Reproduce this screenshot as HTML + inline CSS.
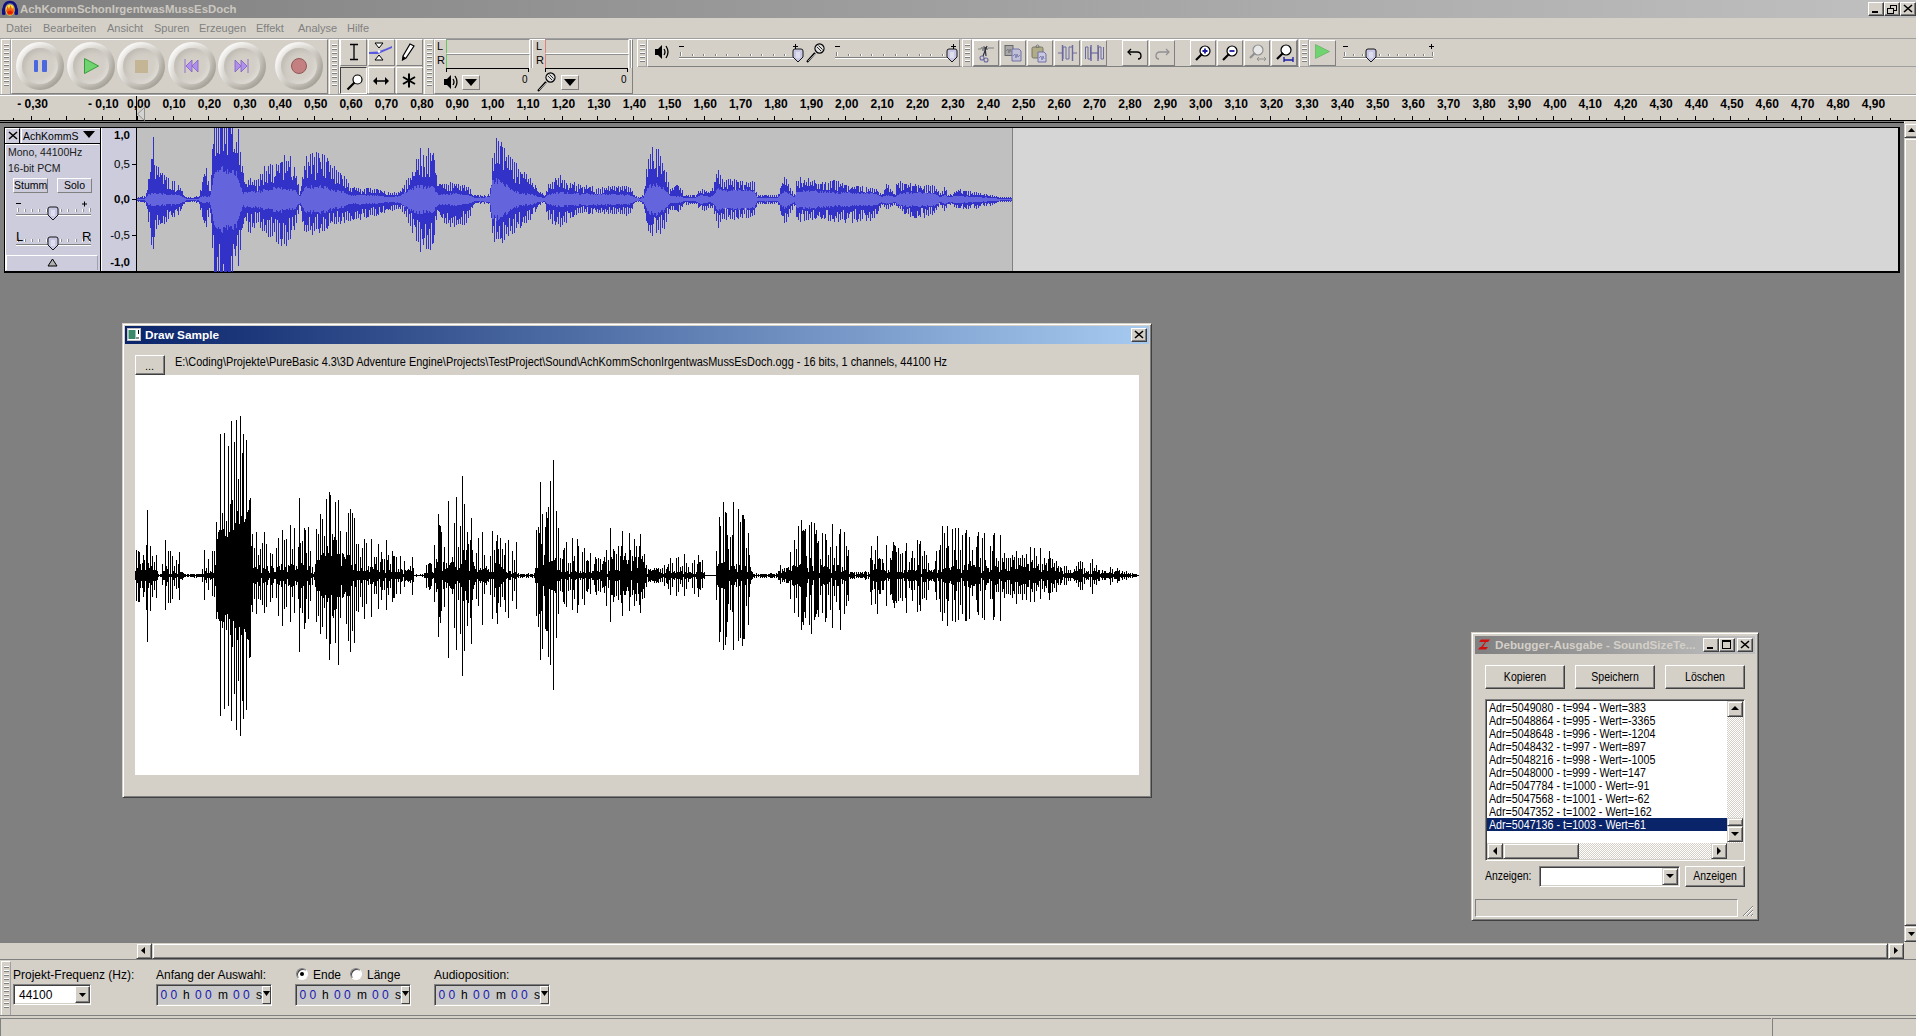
<!DOCTYPE html><html><head><meta charset="utf-8"><style>
*{margin:0;padding:0;box-sizing:border-box}
html,body{width:1916px;height:1036px;overflow:hidden;background:#d4d0c8;font-family:"Liberation Sans",sans-serif;font-size:11px;color:#000}
.a{position:absolute}
.t{position:absolute;white-space:nowrap;line-height:1}
.btn{position:absolute;background:#d4d0c8;border:1px solid;border-color:#fff #404040 #404040 #fff;box-shadow:inset -1px -1px #808080}
.sunk{position:absolute;border:1px solid;border-color:#808080 #fff #fff #808080;box-shadow:inset 1px 1px #404040,inset -1px -1px #d4d0c8}
.grip{position:absolute;width:10px;border:1px solid;border-color:#fff #808080 #808080 #fff;
 background:repeating-linear-gradient(to bottom,#d4d0c8 0,#d4d0c8 2px,#808080 2px,#808080 3px,#fff 3px,#fff 4px)}
</style></head><body>
<div class="a" style="left:0;top:0;width:1916px;height:18px;background:linear-gradient(to right,#808080,#c0c0c0)"></div>
<div class="t" style="left:20px;top:4px;font-weight:bold;font-size:11.4px;color:#ccc8c0">AchKommSchonIrgentwasMussEsDoch</div>
<svg class="a" style="left:1px;top:0" width="18" height="17" viewBox="0 0 18 17"><path d="M3 13 C2 5 5 2 9 2 C13 2 16 5 15 13" fill="none" stroke="#101080" stroke-width="2.6"/><rect x="1" y="8" width="3.5" height="7" rx="1.5" fill="#101080"/><rect x="13.5" y="8" width="3.5" height="7" rx="1.5" fill="#101080"/><ellipse cx="9" cy="10" rx="4.6" ry="5.5" fill="#ffe040"/><path d="M5 11 L6.5 6 L8 9 L9.5 5 L11 9 L12.5 7 L13 12 L11 15 H7Z" fill="#f06010"/><path d="M6 12 Q9 9 12 12 L11 14 H7Z" fill="#e02000"/></svg>
<div class="btn" style="left:1868px;top:2px;width:16px;height:14px"></div>
<div class="btn" style="left:1884px;top:2px;width:16px;height:14px"></div>
<div class="btn" style="left:1900px;top:2px;width:16px;height:14px"></div>
<div class="a" style="left:1872px;top:11px;width:6px;height:2px;background:#000"></div>
<svg class="a" style="left:1887px;top:4px" width="10" height="10"><rect x="3.5" y="1.5" width="6" height="5" fill="none" stroke="#000"/><rect x="3" y="1" width="7" height="1" fill="#000"/><rect x="0.5" y="4.5" width="6" height="5" fill="#d4d0c8" stroke="#000"/><rect x="0" y="4" width="7" height="1" fill="#000"/></svg>
<svg class="a" style="left:1903px;top:4px" width="10" height="9"><path d="M1 1L9 8M9 1L1 8" stroke="#000" stroke-width="1.6"/></svg>
<div class="t" style="left:6px;top:23px;color:#808080">Datei</div>
<div class="t" style="left:43px;top:23px;color:#808080">Bearbeiten</div>
<div class="t" style="left:107px;top:23px;color:#808080">Ansicht</div>
<div class="t" style="left:154px;top:23px;color:#808080">Spuren</div>
<div class="t" style="left:199px;top:23px;color:#808080">Erzeugen</div>
<div class="t" style="left:256px;top:23px;color:#808080">Effekt</div>
<div class="t" style="left:298px;top:23px;color:#808080">Analyse</div>
<div class="t" style="left:347px;top:23px;color:#808080">Hilfe</div>
<div class="a" style="left:0;top:38px;width:1916px;height:1px;background:#a0a0a0"></div>
<div class="a" style="left:637px;top:66px;width:1279px;height:1px;background:#a0a0a0"></div>
<div class="a" style="left:0;top:94px;width:1916px;height:1px;background:#a0a0a0"></div>
<div class="a" style="left:1px;top:39px;width:10px;height:55px;border-left:1px solid #fff;border-top:1px solid #fff;border-right:1px solid #a0a0a0"></div>
<div class="a" style="left:4px;top:44px;width:5px;height:2px;border-top:1px solid #fff;border-bottom:1px solid #808080"></div>
<div class="a" style="left:4px;top:48px;width:5px;height:2px;border-top:1px solid #fff;border-bottom:1px solid #808080"></div>
<div class="a" style="left:4px;top:52px;width:5px;height:2px;border-top:1px solid #fff;border-bottom:1px solid #808080"></div>
<div class="a" style="left:4px;top:56px;width:5px;height:2px;border-top:1px solid #fff;border-bottom:1px solid #808080"></div>
<div class="a" style="left:4px;top:60px;width:5px;height:2px;border-top:1px solid #fff;border-bottom:1px solid #808080"></div>
<div class="a" style="left:4px;top:64px;width:5px;height:2px;border-top:1px solid #fff;border-bottom:1px solid #808080"></div>
<div class="a" style="left:4px;top:68px;width:5px;height:2px;border-top:1px solid #fff;border-bottom:1px solid #808080"></div>
<div class="a" style="left:4px;top:72px;width:5px;height:2px;border-top:1px solid #fff;border-bottom:1px solid #808080"></div>
<div class="a" style="left:4px;top:76px;width:5px;height:2px;border-top:1px solid #fff;border-bottom:1px solid #808080"></div>
<div class="a" style="left:4px;top:80px;width:5px;height:2px;border-top:1px solid #fff;border-bottom:1px solid #808080"></div>
<div class="a" style="left:4px;top:84px;width:5px;height:2px;border-top:1px solid #fff;border-bottom:1px solid #808080"></div>
<div class="a" style="left:11px;top:39px;width:317px;height:55px;border-left:1px solid #fff;border-top:1px solid #fff;border-right:1px solid #808080;border-bottom:1px solid #808080"></div>
<div class="a" style="left:16px;top:42px;width:48px;height:48px;border-radius:50%;background:#d4d0c8;box-shadow:inset 5px 5px 6px -2px rgba(255,255,255,.9),inset -5px -5px 7px -2px rgba(120,116,108,.55)"></div>
<div class="a" style="left:22px;top:48px;width:36px;height:36px;border-radius:50%;background:#d3cfc7;box-shadow:inset 3px 3px 5px rgba(150,146,138,.3),inset -2px -2px 4px rgba(255,255,255,.3)"></div>
<div class="a" style="left:66.5px;top:42px;width:48px;height:48px;border-radius:50%;background:#d4d0c8;box-shadow:inset 5px 5px 6px -2px rgba(255,255,255,.9),inset -5px -5px 7px -2px rgba(120,116,108,.55)"></div>
<div class="a" style="left:72.5px;top:48px;width:36px;height:36px;border-radius:50%;background:#d3cfc7;box-shadow:inset 3px 3px 5px rgba(150,146,138,.3),inset -2px -2px 4px rgba(255,255,255,.3)"></div>
<div class="a" style="left:117px;top:42px;width:48px;height:48px;border-radius:50%;background:#d4d0c8;box-shadow:inset 5px 5px 6px -2px rgba(255,255,255,.9),inset -5px -5px 7px -2px rgba(120,116,108,.55)"></div>
<div class="a" style="left:123px;top:48px;width:36px;height:36px;border-radius:50%;background:#d3cfc7;box-shadow:inset 3px 3px 5px rgba(150,146,138,.3),inset -2px -2px 4px rgba(255,255,255,.3)"></div>
<div class="a" style="left:167.5px;top:42px;width:48px;height:48px;border-radius:50%;background:#d4d0c8;box-shadow:inset 5px 5px 6px -2px rgba(255,255,255,.9),inset -5px -5px 7px -2px rgba(120,116,108,.55)"></div>
<div class="a" style="left:173.5px;top:48px;width:36px;height:36px;border-radius:50%;background:#d3cfc7;box-shadow:inset 3px 3px 5px rgba(150,146,138,.3),inset -2px -2px 4px rgba(255,255,255,.3)"></div>
<div class="a" style="left:217.5px;top:42px;width:48px;height:48px;border-radius:50%;background:#d4d0c8;box-shadow:inset 5px 5px 6px -2px rgba(255,255,255,.9),inset -5px -5px 7px -2px rgba(120,116,108,.55)"></div>
<div class="a" style="left:223.5px;top:48px;width:36px;height:36px;border-radius:50%;background:#d3cfc7;box-shadow:inset 3px 3px 5px rgba(150,146,138,.3),inset -2px -2px 4px rgba(255,255,255,.3)"></div>
<div class="a" style="left:274.5px;top:42px;width:48px;height:48px;border-radius:50%;background:#d4d0c8;box-shadow:inset 5px 5px 6px -2px rgba(255,255,255,.9),inset -5px -5px 7px -2px rgba(120,116,108,.55)"></div>
<div class="a" style="left:280.5px;top:48px;width:36px;height:36px;border-radius:50%;background:#d3cfc7;box-shadow:inset 3px 3px 5px rgba(150,146,138,.3),inset -2px -2px 4px rgba(255,255,255,.3)"></div>
<div class="a" style="left:34px;top:60px;width:4px;height:12px;background:#4a68e0;border-radius:1px"></div>
<div class="a" style="left:42px;top:60px;width:5px;height:12px;background:#4a68e0;border-radius:1px"></div>
<svg class="a" style="left:83px;top:57px" width="18" height="18"><path d="M1.5 1.5 L15.5 9 L1.5 16.5Z" fill="#6fd46f" stroke="#3c9a3c" stroke-width="1"/></svg>
<div class="a" style="left:135px;top:60px;width:13px;height:13px;background:#c4b595"></div>
<svg class="a" style="left:184px;top:58px" width="15" height="16"><path d="M1 1V15" stroke="#9070c8"/><path d="M8 2 L2 8 L8 14Z M14 2 L8 8 L14 14Z" fill="#b090ec" stroke="#8060c0" stroke-width="0.8"/></svg>
<svg class="a" style="left:234px;top:58px" width="15" height="16"><path d="M14 1V15" stroke="#9070c8"/><path d="M1 2 L7 8 L1 14Z M7 2 L13 8 L7 14Z" fill="#b090ec" stroke="#8060c0" stroke-width="0.8"/></svg>
<div class="a" style="left:291px;top:58px;width:16px;height:16px;border-radius:50%;background:#c48080;border:1px solid #905858"></div>
<div class="a" style="left:329px;top:39px;width:10px;height:55px;border-left:1px solid #fff;border-top:1px solid #fff;border-right:1px solid #a0a0a0"></div>
<div class="a" style="left:332px;top:44px;width:5px;height:2px;border-top:1px solid #fff;border-bottom:1px solid #808080"></div>
<div class="a" style="left:332px;top:48px;width:5px;height:2px;border-top:1px solid #fff;border-bottom:1px solid #808080"></div>
<div class="a" style="left:332px;top:52px;width:5px;height:2px;border-top:1px solid #fff;border-bottom:1px solid #808080"></div>
<div class="a" style="left:332px;top:56px;width:5px;height:2px;border-top:1px solid #fff;border-bottom:1px solid #808080"></div>
<div class="a" style="left:332px;top:60px;width:5px;height:2px;border-top:1px solid #fff;border-bottom:1px solid #808080"></div>
<div class="a" style="left:332px;top:64px;width:5px;height:2px;border-top:1px solid #fff;border-bottom:1px solid #808080"></div>
<div class="a" style="left:332px;top:68px;width:5px;height:2px;border-top:1px solid #fff;border-bottom:1px solid #808080"></div>
<div class="a" style="left:332px;top:72px;width:5px;height:2px;border-top:1px solid #fff;border-bottom:1px solid #808080"></div>
<div class="a" style="left:332px;top:76px;width:5px;height:2px;border-top:1px solid #fff;border-bottom:1px solid #808080"></div>
<div class="a" style="left:332px;top:80px;width:5px;height:2px;border-top:1px solid #fff;border-bottom:1px solid #808080"></div>
<div class="a" style="left:332px;top:84px;width:5px;height:2px;border-top:1px solid #fff;border-bottom:1px solid #808080"></div>
<div class="a" style="left:339px;top:39px;width:84px;height:55px;border-left:1px solid #fff;border-top:1px solid #fff;border-right:1px solid #808080;border-bottom:1px solid #808080"></div>
<div class="a" style="left:340px;top:39px;width:27px;height:27px;border-left:1px solid #fff;border-top:1px solid #fff;border-right:1px solid #808080;border-bottom:1px solid #808080"></div>
<div class="a" style="left:368px;top:39px;width:27px;height:27px;border-left:1px solid #fff;border-top:1px solid #fff;border-right:1px solid #808080;border-bottom:1px solid #808080"></div>
<div class="a" style="left:396px;top:39px;width:27px;height:27px;border-left:1px solid #fff;border-top:1px solid #fff;border-right:1px solid #808080;border-bottom:1px solid #808080"></div>
<div class="a" style="left:340px;top:67px;width:27px;height:27px;border-left:1px solid #404040;border-top:1px solid #404040;border-right:1px solid #fff;border-bottom:1px solid #fff"></div>
<div class="a" style="left:368px;top:67px;width:27px;height:27px;border-left:1px solid #fff;border-top:1px solid #fff;border-right:1px solid #808080;border-bottom:1px solid #808080"></div>
<div class="a" style="left:396px;top:67px;width:27px;height:27px;border-left:1px solid #fff;border-top:1px solid #fff;border-right:1px solid #808080;border-bottom:1px solid #808080"></div>
<svg class="a" style="left:349px;top:43px" width="10" height="18"><path d="M1 1.5H9M5 1.5V16.5M1 16.5H9" stroke="#000" stroke-width="1.3" fill="none"/></svg>
<svg class="a" style="left:368px;top:41px" width="26" height="22"><path d="M7 2H15L11 7Z" fill="#fff" stroke="#000"/><path d="M7 19H15L11 14Z" fill="#fff" stroke="#000"/><path d="M1 11 L10 10.5 L17 8 L24 5 L24 7 L17 10 L10 13 L1 13Z" fill="#5a5ae0"/><circle cx="11" cy="10.5" r="1.3" fill="#fff"/></svg>
<svg class="a" style="left:401px;top:43px" width="14" height="18"><path d="M9 1 L13 3 L5 15 L1.5 17 L2 13Z" fill="#fff" stroke="#000" stroke-width="1.2"/><path d="M2 13 L5 15 L1.5 17Z" fill="#000"/></svg>
<svg class="a" style="left:346px;top:73px" width="18" height="18"><circle cx="11.5" cy="6.5" r="4.5" fill="#fff" stroke="#000" stroke-width="1.2"/><path d="M8.5 9.5 L1.5 16.5" stroke="#000" stroke-width="2.2"/></svg>
<svg class="a" style="left:372px;top:75px" width="18" height="12"><path d="M1 6 L5 2 V10Z M17 6 L13 2 V10Z" fill="#000"/><path d="M4 6H14" stroke="#000" stroke-width="1.5"/></svg>
<svg class="a" style="left:402px;top:73px" width="14" height="15"><path d="M7 0.5V14.5M1 4L13 11M13 4L1 11" stroke="#000" stroke-width="2"/></svg>
<div class="a" style="left:424px;top:39px;width:10px;height:55px;border-left:1px solid #fff;border-top:1px solid #fff;border-right:1px solid #a0a0a0"></div>
<div class="a" style="left:427px;top:44px;width:5px;height:2px;border-top:1px solid #fff;border-bottom:1px solid #808080"></div>
<div class="a" style="left:427px;top:48px;width:5px;height:2px;border-top:1px solid #fff;border-bottom:1px solid #808080"></div>
<div class="a" style="left:427px;top:52px;width:5px;height:2px;border-top:1px solid #fff;border-bottom:1px solid #808080"></div>
<div class="a" style="left:427px;top:56px;width:5px;height:2px;border-top:1px solid #fff;border-bottom:1px solid #808080"></div>
<div class="a" style="left:427px;top:60px;width:5px;height:2px;border-top:1px solid #fff;border-bottom:1px solid #808080"></div>
<div class="a" style="left:427px;top:64px;width:5px;height:2px;border-top:1px solid #fff;border-bottom:1px solid #808080"></div>
<div class="a" style="left:427px;top:68px;width:5px;height:2px;border-top:1px solid #fff;border-bottom:1px solid #808080"></div>
<div class="a" style="left:427px;top:72px;width:5px;height:2px;border-top:1px solid #fff;border-bottom:1px solid #808080"></div>
<div class="a" style="left:427px;top:76px;width:5px;height:2px;border-top:1px solid #fff;border-bottom:1px solid #808080"></div>
<div class="a" style="left:427px;top:80px;width:5px;height:2px;border-top:1px solid #fff;border-bottom:1px solid #808080"></div>
<div class="a" style="left:427px;top:84px;width:5px;height:2px;border-top:1px solid #fff;border-bottom:1px solid #808080"></div>
<div class="a" style="left:434px;top:39px;width:199px;height:55px;border-left:1px solid #fff;border-top:1px solid #fff;border-right:1px solid #808080;border-bottom:1px solid #808080"></div>
<div class="t" style="left:437px;top:41px;font-size:11px">L</div>
<div class="t" style="left:437px;top:55px;font-size:11px">R</div>
<div class="a" style="left:446px;top:39px;width:84px;height:15px;border-top:1px solid #909090;border-right:1px solid #fff;border-bottom:1px solid #fff;border-left:1px solid #64c864"></div>
<div class="a" style="left:446px;top:54px;width:84px;height:15px;border-top:1px solid #909090;border-right:1px solid #fff;border-bottom:1px solid #fff;border-left:1px solid #64c864"></div>
<div class="a" style="left:532px;top:40px;width:1px;height:28px;background:#fff;box-shadow:-1px 0 #a0a0a0"></div>
<div class="a" style="left:446px;top:68px;width:83px;height:1px;background:#000"></div>
<div class="a" style="left:446px;top:68px;width:1px;height:4px;background:#000"></div>
<div class="a" style="left:528px;top:68px;width:1px;height:4px;background:#000"></div>
<div class="t" style="left:522px;top:75px;font-size:10px">0</div>
<div class="btn" style="left:462px;top:75px;width:18px;height:15px;box-shadow:none;border-color:#fff #808080 #808080 #fff"></div>
<svg class="a" style="left:465px;top:79px" width="12" height="7"><path d="M0 0H12L6 7Z" fill="#000"/></svg>
<div class="t" style="left:536px;top:41px;font-size:11px">L</div>
<div class="t" style="left:536px;top:55px;font-size:11px">R</div>
<div class="a" style="left:545px;top:39px;width:84px;height:15px;border-top:1px solid #909090;border-right:1px solid #fff;border-bottom:1px solid #fff;border-left:1px solid #e08080"></div>
<div class="a" style="left:545px;top:54px;width:84px;height:15px;border-top:1px solid #909090;border-right:1px solid #fff;border-bottom:1px solid #fff;border-left:1px solid #e08080"></div>
<div class="a" style="left:631px;top:40px;width:1px;height:28px;background:#fff;box-shadow:-1px 0 #a0a0a0"></div>
<div class="a" style="left:545px;top:68px;width:83px;height:1px;background:#000"></div>
<div class="a" style="left:545px;top:68px;width:1px;height:4px;background:#000"></div>
<div class="a" style="left:627px;top:68px;width:1px;height:4px;background:#000"></div>
<div class="t" style="left:621px;top:75px;font-size:10px">0</div>
<div class="btn" style="left:561px;top:75px;width:18px;height:15px;box-shadow:none;border-color:#fff #808080 #808080 #fff"></div>
<svg class="a" style="left:564px;top:79px" width="12" height="7"><path d="M0 0H12L6 7Z" fill="#000"/></svg>
<svg class="a" style="left:443px;top:74px" width="16" height="16"><path d="M1 5H4L8 1V15L4 11H1Z" fill="#000"/><path d="M10 5Q12 8 10 11M12 2Q16 8 12 14" stroke="#000" stroke-width="1.3" fill="none"/></svg>
<svg class="a" style="left:537px;top:72px" width="20" height="20"><path d="M1 19 L9 10" stroke="#000" stroke-width="2"/><path d="M2 18 L9 11" stroke="#fff" stroke-width="0.6"/><ellipse cx="13.5" cy="5.5" rx="4.5" ry="4.5" transform="rotate(45 13.5 5.5)" fill="#ddd" stroke="#000" stroke-width="1.3"/><path d="M11 4L15 8M12.5 2.5L16.5 6.5" stroke="#000" stroke-width="0.8"/></svg>
<div class="a" style="left:637px;top:39px;width:10px;height:28px;border-left:1px solid #fff;border-top:1px solid #fff;border-right:1px solid #a0a0a0"></div>
<div class="a" style="left:640px;top:44px;width:5px;height:2px;border-top:1px solid #fff;border-bottom:1px solid #808080"></div>
<div class="a" style="left:640px;top:48px;width:5px;height:2px;border-top:1px solid #fff;border-bottom:1px solid #808080"></div>
<div class="a" style="left:640px;top:52px;width:5px;height:2px;border-top:1px solid #fff;border-bottom:1px solid #808080"></div>
<div class="a" style="left:640px;top:56px;width:5px;height:2px;border-top:1px solid #fff;border-bottom:1px solid #808080"></div>
<div class="a" style="left:640px;top:60px;width:5px;height:2px;border-top:1px solid #fff;border-bottom:1px solid #808080"></div>
<div class="a" style="left:647px;top:39px;width:313px;height:28px;border-left:1px solid #fff;border-top:1px solid #fff;border-right:1px solid #808080;border-bottom:1px solid #808080"></div>
<svg class="a" style="left:654px;top:44px" width="16" height="16"><path d="M1 5H4L8 1V15L4 11H1Z" fill="#000"/><path d="M10 5Q12 8 10 11M12 2Q16 8 12 14" stroke="#000" stroke-width="1.3" fill="none"/></svg>
<svg class="a" style="left:806px;top:43px" width="20" height="20"><path d="M1 19 L9 10" stroke="#000" stroke-width="2"/><path d="M2 18 L9 11" stroke="#fff" stroke-width="0.6"/><ellipse cx="13.5" cy="5.5" rx="4.5" ry="4.5" transform="rotate(45 13.5 5.5)" fill="#ddd" stroke="#000" stroke-width="1.3"/><path d="M11 4L15 8M12.5 2.5L16.5 6.5" stroke="#000" stroke-width="0.8"/></svg>
<div class="a" style="left:679px;top:46px;width:5px;height:1px;background:#000"></div>
<div class="a" style="left:793px;top:46px;width:5px;height:1px;background:#000"></div>
<div class="a" style="left:795px;top:44px;width:1px;height:5px;background:#000"></div>
<div class="a" style="left:679px;top:57px;width:118px;height:1px;background:#808080;border-bottom:1px solid #fff;height:2px"></div>
<div class="a" style="left:680px;top:52px;width:1px;height:4px;background:#808080;box-shadow:1px 0 #fff"></div>
<div class="a" style="left:692px;top:54px;width:1px;height:2px;background:#808080;box-shadow:1px 0 #fff"></div>
<div class="a" style="left:703px;top:54px;width:1px;height:2px;background:#808080;box-shadow:1px 0 #fff"></div>
<div class="a" style="left:715px;top:54px;width:1px;height:2px;background:#808080;box-shadow:1px 0 #fff"></div>
<div class="a" style="left:726px;top:54px;width:1px;height:2px;background:#808080;box-shadow:1px 0 #fff"></div>
<div class="a" style="left:738px;top:54px;width:1px;height:2px;background:#808080;box-shadow:1px 0 #fff"></div>
<div class="a" style="left:750px;top:54px;width:1px;height:2px;background:#808080;box-shadow:1px 0 #fff"></div>
<div class="a" style="left:761px;top:54px;width:1px;height:2px;background:#808080;box-shadow:1px 0 #fff"></div>
<div class="a" style="left:773px;top:54px;width:1px;height:2px;background:#808080;box-shadow:1px 0 #fff"></div>
<div class="a" style="left:784px;top:54px;width:1px;height:2px;background:#808080;box-shadow:1px 0 #fff"></div>
<div class="a" style="left:796px;top:52px;width:1px;height:4px;background:#808080;box-shadow:1px 0 #fff"></div>
<svg class="a" style="left:792px;top:48px" width="12" height="15"><path d="M1 3 Q1 1 3 1H9Q11 1 11 3V9L6 14L1 9Z" fill="#c8c8e4" stroke="#000" stroke-width="0.9"/><path d="M4 5H8M4 7H8M4 9H8" stroke="#fff" stroke-width="0.8"/></svg>
<div class="a" style="left:835px;top:46px;width:5px;height:1px;background:#000"></div>
<div class="a" style="left:951px;top:46px;width:5px;height:1px;background:#000"></div>
<div class="a" style="left:953px;top:44px;width:1px;height:5px;background:#000"></div>
<div class="a" style="left:835px;top:57px;width:120px;height:1px;background:#808080;border-bottom:1px solid #fff;height:2px"></div>
<div class="a" style="left:836px;top:52px;width:1px;height:4px;background:#808080;box-shadow:1px 0 #fff"></div>
<div class="a" style="left:848px;top:54px;width:1px;height:2px;background:#808080;box-shadow:1px 0 #fff"></div>
<div class="a" style="left:860px;top:54px;width:1px;height:2px;background:#808080;box-shadow:1px 0 #fff"></div>
<div class="a" style="left:871px;top:54px;width:1px;height:2px;background:#808080;box-shadow:1px 0 #fff"></div>
<div class="a" style="left:883px;top:54px;width:1px;height:2px;background:#808080;box-shadow:1px 0 #fff"></div>
<div class="a" style="left:895px;top:54px;width:1px;height:2px;background:#808080;box-shadow:1px 0 #fff"></div>
<div class="a" style="left:907px;top:54px;width:1px;height:2px;background:#808080;box-shadow:1px 0 #fff"></div>
<div class="a" style="left:919px;top:54px;width:1px;height:2px;background:#808080;box-shadow:1px 0 #fff"></div>
<div class="a" style="left:930px;top:54px;width:1px;height:2px;background:#808080;box-shadow:1px 0 #fff"></div>
<div class="a" style="left:942px;top:54px;width:1px;height:2px;background:#808080;box-shadow:1px 0 #fff"></div>
<div class="a" style="left:954px;top:52px;width:1px;height:4px;background:#808080;box-shadow:1px 0 #fff"></div>
<svg class="a" style="left:946px;top:48px" width="12" height="15"><path d="M1 3 Q1 1 3 1H9Q11 1 11 3V9L6 14L1 9Z" fill="#c8c8e4" stroke="#000" stroke-width="0.9"/><path d="M4 5H8M4 7H8M4 9H8" stroke="#fff" stroke-width="0.8"/></svg>
<div class="a" style="left:962px;top:39px;width:10px;height:28px;border-left:1px solid #fff;border-top:1px solid #fff;border-right:1px solid #a0a0a0"></div>
<div class="a" style="left:965px;top:44px;width:5px;height:2px;border-top:1px solid #fff;border-bottom:1px solid #808080"></div>
<div class="a" style="left:965px;top:48px;width:5px;height:2px;border-top:1px solid #fff;border-bottom:1px solid #808080"></div>
<div class="a" style="left:965px;top:52px;width:5px;height:2px;border-top:1px solid #fff;border-bottom:1px solid #808080"></div>
<div class="a" style="left:965px;top:56px;width:5px;height:2px;border-top:1px solid #fff;border-bottom:1px solid #808080"></div>
<div class="a" style="left:965px;top:60px;width:5px;height:2px;border-top:1px solid #fff;border-bottom:1px solid #808080"></div>
<div class="a" style="left:972px;top:39px;width:326px;height:28px;border-left:1px solid #fff;border-top:1px solid #fff;border-right:1px solid #808080;border-bottom:1px solid #808080"></div>
<div class="a" style="left:973px;top:40px;width:26px;height:26px;border-left:1px solid #fff;border-top:1px solid #fff;border-right:1px solid #808080;border-bottom:1px solid #808080"></div>
<div class="a" style="left:1000px;top:40px;width:26px;height:26px;border-left:1px solid #fff;border-top:1px solid #fff;border-right:1px solid #808080;border-bottom:1px solid #808080"></div>
<div class="a" style="left:1027px;top:40px;width:26px;height:26px;border-left:1px solid #fff;border-top:1px solid #fff;border-right:1px solid #808080;border-bottom:1px solid #808080"></div>
<div class="a" style="left:1054px;top:40px;width:26px;height:26px;border-left:1px solid #fff;border-top:1px solid #fff;border-right:1px solid #808080;border-bottom:1px solid #808080"></div>
<div class="a" style="left:1081px;top:40px;width:26px;height:26px;border-left:1px solid #fff;border-top:1px solid #fff;border-right:1px solid #808080;border-bottom:1px solid #808080"></div>
<div class="a" style="left:1122px;top:40px;width:26px;height:26px;border-left:1px solid #fff;border-top:1px solid #fff;border-right:1px solid #808080;border-bottom:1px solid #808080"></div>
<div class="a" style="left:1149px;top:40px;width:26px;height:26px;border-left:1px solid #fff;border-top:1px solid #fff;border-right:1px solid #808080;border-bottom:1px solid #808080"></div>
<div class="a" style="left:1190px;top:40px;width:26px;height:26px;border-left:1px solid #fff;border-top:1px solid #fff;border-right:1px solid #808080;border-bottom:1px solid #808080"></div>
<div class="a" style="left:1217px;top:40px;width:26px;height:26px;border-left:1px solid #fff;border-top:1px solid #fff;border-right:1px solid #808080;border-bottom:1px solid #808080"></div>
<div class="a" style="left:1244px;top:40px;width:26px;height:26px;border-left:1px solid #fff;border-top:1px solid #fff;border-right:1px solid #808080;border-bottom:1px solid #808080"></div>
<div class="a" style="left:1271px;top:40px;width:26px;height:26px;border-left:1px solid #fff;border-top:1px solid #fff;border-right:1px solid #808080;border-bottom:1px solid #808080"></div>
<svg class="a" style="left:977px;top:44px" width="20" height="19"><path d="M1 5H4L5 3L6 7L7 2L8 8L9 3L10 6L11 4H17" stroke="#707070" stroke-width="0.8" fill="none"/><path d="M10 2L6 12M8 3L9 12" stroke="#303040" stroke-width="1.2"/><circle cx="5" cy="14" r="2" fill="none" stroke="#6a6aa0" stroke-width="1.1"/><circle cx="9" cy="16" r="2" fill="none" stroke="#6a6aa0" stroke-width="1.1"/></svg>
<svg class="a" style="left:1004px;top:44px" width="20" height="19"><rect x="1" y="1.5" width="8" height="10" fill="#a8a8a8" stroke="#606060" stroke-width="0.9"/><path d="M2 7L4 5L5 9L6 5L7 8" stroke="#707070" stroke-width="0.7" fill="none"/><path d="M8 5H15L17 7V17H8Z" fill="#c0c0d8" stroke="#6a6aa0" stroke-width="0.9"/><path d="M9 12L11 10L12 14L13 10L14 13L16 11" stroke="#6a6aa0" stroke-width="0.7" fill="none"/></svg>
<svg class="a" style="left:1031px;top:44px" width="20" height="19"><rect x="1" y="3" width="11" height="11" rx="1.5" fill="#b0ac88" stroke="#707060" stroke-width="0.9"/><path d="M5 3Q5 1 6.5 1Q8 1 8 3Z" fill="#e0e0e0" stroke="#606060" stroke-width="0.8"/><path d="M7 8H13L15 10V18H7Z" fill="#c8c8e0" stroke="#6a6aa0" stroke-width="0.9"/><path d="M8 14L10 12L11 16L12 12L13 15" stroke="#6a6aa0" stroke-width="0.7" fill="none"/></svg>
<svg class="a" style="left:1058px;top:44px" width="20" height="19"><path d="M0 9H4M15 9H19" stroke="#6a6aa0" stroke-width="1.2"/><path d="M4.5 1V17M14.5 1V17" stroke="#6a6aa0" stroke-width="1.4"/><path d="M5 15V3H8V15H11V3H14" stroke="#6a6aa0" stroke-width="1" fill="none"/></svg>
<svg class="a" style="left:1085px;top:44px" width="20" height="19"><path d="M0.5 15V3H3V15H5.5V3" stroke="#6a6aa0" stroke-width="1" fill="none"/><path d="M6 1V17M13 1V17" stroke="#6a6aa0" stroke-width="1.4"/><path d="M6 9H13" stroke="#6a6aa0" stroke-width="1.2"/><path d="M13.5 15V3H16V15H18.5V3" stroke="#6a6aa0" stroke-width="1" fill="none"/></svg>
<svg class="a" style="left:1126px;top:44px" width="20" height="19"><path d="M5 5 L2 8 L5 11" stroke="#000" fill="none" stroke-width="1.3"/><path d="M2 8H11Q15 8 15 12Q15 15 12 15" stroke="#000" fill="none" stroke-width="1.3"/></svg>
<svg class="a" style="left:1153px;top:44px" width="20" height="19"><path d="M13 5 L16 8 L13 11" stroke="#909090" fill="none" stroke-width="1.3"/><path d="M16 8H7Q3 8 3 12Q3 15 6 15" stroke="#909090" fill="none" stroke-width="1.3"/></svg>
<svg class="a" style="left:1194px;top:44px" width="20" height="19"><circle cx="11" cy="7" r="5" fill="#fff" stroke="#000" stroke-width="1.2"/><path d="M8 10L2 16" stroke="#000" stroke-width="2.2"/><path d="M8.5 7H13.5M11 4.5V9.5" stroke="#1a1aa0" stroke-width="1.8"/></svg>
<svg class="a" style="left:1221px;top:44px" width="20" height="19"><circle cx="11" cy="7" r="5" fill="#fff" stroke="#000" stroke-width="1.2"/><path d="M8 10L2 16" stroke="#000" stroke-width="2.2"/><path d="M8.5 7H13.5" stroke="#1a1aa0" stroke-width="1.8"/></svg>
<svg class="a" style="left:1248px;top:44px" width="20" height="19"><circle cx="10" cy="6" r="5" fill="#e8e8e8" stroke="#909090" stroke-width="1.2"/><path d="M7 9L2 14" stroke="#909090" stroke-width="2.2"/><path d="M9 15H18M9 15L11 13M9 15L11 17M18 15L16 13M18 15L16 17" stroke="#909090"/></svg>
<svg class="a" style="left:1275px;top:44px" width="20" height="19"><circle cx="11" cy="6" r="5" fill="#fff" stroke="#000" stroke-width="1.2"/><path d="M8 9L2 15" stroke="#000" stroke-width="2.2"/><path d="M9 16H18M9 13V18M18 13V18" stroke="#1a1aa0" stroke-width="1.3"/></svg>
<div class="a" style="left:1299px;top:39px;width:10px;height:28px;border-left:1px solid #fff;border-top:1px solid #fff;border-right:1px solid #a0a0a0"></div>
<div class="a" style="left:1302px;top:44px;width:5px;height:2px;border-top:1px solid #fff;border-bottom:1px solid #808080"></div>
<div class="a" style="left:1302px;top:48px;width:5px;height:2px;border-top:1px solid #fff;border-bottom:1px solid #808080"></div>
<div class="a" style="left:1302px;top:52px;width:5px;height:2px;border-top:1px solid #fff;border-bottom:1px solid #808080"></div>
<div class="a" style="left:1302px;top:56px;width:5px;height:2px;border-top:1px solid #fff;border-bottom:1px solid #808080"></div>
<div class="a" style="left:1302px;top:60px;width:5px;height:2px;border-top:1px solid #fff;border-bottom:1px solid #808080"></div>
<div class="a" style="left:1309px;top:40px;width:27px;height:26px;border-left:1px solid #fff;border-top:1px solid #fff;border-right:1px solid #808080;border-bottom:1px solid #808080"></div>
<svg class="a" style="left:1314px;top:43px" width="17" height="18"><path d="M1.5 1.5L15.5 8.5L1.5 15.5Z" fill="#6fd46f" stroke="#5aa85a" stroke-width="0.6"/></svg>
<div class="a" style="left:1343px;top:46px;width:5px;height:1px;background:#000"></div>
<div class="a" style="left:1429px;top:46px;width:5px;height:1px;background:#000"></div>
<div class="a" style="left:1431px;top:44px;width:1px;height:5px;background:#000"></div>
<div class="a" style="left:1343px;top:57px;width:90px;height:1px;background:#808080;border-bottom:1px solid #fff;height:2px"></div>
<div class="a" style="left:1344px;top:52px;width:1px;height:4px;background:#808080;box-shadow:1px 0 #fff"></div>
<div class="a" style="left:1353px;top:54px;width:1px;height:2px;background:#808080;box-shadow:1px 0 #fff"></div>
<div class="a" style="left:1362px;top:54px;width:1px;height:2px;background:#808080;box-shadow:1px 0 #fff"></div>
<div class="a" style="left:1370px;top:54px;width:1px;height:2px;background:#808080;box-shadow:1px 0 #fff"></div>
<div class="a" style="left:1379px;top:54px;width:1px;height:2px;background:#808080;box-shadow:1px 0 #fff"></div>
<div class="a" style="left:1388px;top:54px;width:1px;height:2px;background:#808080;box-shadow:1px 0 #fff"></div>
<div class="a" style="left:1397px;top:54px;width:1px;height:2px;background:#808080;box-shadow:1px 0 #fff"></div>
<div class="a" style="left:1406px;top:54px;width:1px;height:2px;background:#808080;box-shadow:1px 0 #fff"></div>
<div class="a" style="left:1414px;top:54px;width:1px;height:2px;background:#808080;box-shadow:1px 0 #fff"></div>
<div class="a" style="left:1423px;top:54px;width:1px;height:2px;background:#808080;box-shadow:1px 0 #fff"></div>
<div class="a" style="left:1432px;top:52px;width:1px;height:4px;background:#808080;box-shadow:1px 0 #fff"></div>
<svg class="a" style="left:1365px;top:48px" width="12" height="15"><path d="M1 3 Q1 1 3 1H9Q11 1 11 3V9L6 14L1 9Z" fill="#c8c8e4" stroke="#000" stroke-width="0.9"/><path d="M4 5H8M4 7H8M4 9H8" stroke="#fff" stroke-width="0.8"/></svg>
<div class="a" style="left:0;top:95px;width:1916px;height:1px;background:#fff"></div>
<div class="a" style="left:0;top:120px;width:1916px;height:1px;background:#000"></div>
<div class="a" style="left:13px;top:118px;width:1px;height:2px;background:#000"></div><div class="a" style="left:31px;top:116px;width:1px;height:4px;background:#000"></div><div class="t" style="left:-27.5px;width:120px;text-align:center;top:98px;font-size:12px;font-weight:bold">- 0,30</div><div class="a" style="left:49px;top:118px;width:1px;height:2px;background:#000"></div><div class="a" style="left:66px;top:116px;width:1px;height:4px;background:#000"></div><div class="a" style="left:84px;top:118px;width:1px;height:2px;background:#000"></div><div class="a" style="left:102px;top:116px;width:1px;height:4px;background:#000"></div><div class="t" style="left:43.3px;width:120px;text-align:center;top:98px;font-size:12px;font-weight:bold">- 0,10</div><div class="a" style="left:119px;top:118px;width:1px;height:2px;background:#000"></div><div class="a" style="left:137px;top:116px;width:1px;height:4px;background:#000"></div><div class="t" style="left:78.7px;width:120px;text-align:center;top:98px;font-size:12px;font-weight:bold">0,00</div><div class="a" style="left:155px;top:118px;width:1px;height:2px;background:#000"></div><div class="a" style="left:173px;top:116px;width:1px;height:4px;background:#000"></div><div class="t" style="left:114.1px;width:120px;text-align:center;top:98px;font-size:12px;font-weight:bold">0,10</div><div class="a" style="left:190px;top:118px;width:1px;height:2px;background:#000"></div><div class="a" style="left:208px;top:116px;width:1px;height:4px;background:#000"></div><div class="t" style="left:149.5px;width:120px;text-align:center;top:98px;font-size:12px;font-weight:bold">0,20</div><div class="a" style="left:226px;top:118px;width:1px;height:2px;background:#000"></div><div class="a" style="left:243px;top:116px;width:1px;height:4px;background:#000"></div><div class="t" style="left:184.9px;width:120px;text-align:center;top:98px;font-size:12px;font-weight:bold">0,30</div><div class="a" style="left:261px;top:118px;width:1px;height:2px;background:#000"></div><div class="a" style="left:279px;top:116px;width:1px;height:4px;background:#000"></div><div class="t" style="left:220.3px;width:120px;text-align:center;top:98px;font-size:12px;font-weight:bold">0,40</div><div class="a" style="left:297px;top:118px;width:1px;height:2px;background:#000"></div><div class="a" style="left:314px;top:116px;width:1px;height:4px;background:#000"></div><div class="t" style="left:255.7px;width:120px;text-align:center;top:98px;font-size:12px;font-weight:bold">0,50</div><div class="a" style="left:332px;top:118px;width:1px;height:2px;background:#000"></div><div class="a" style="left:350px;top:116px;width:1px;height:4px;background:#000"></div><div class="t" style="left:291.1px;width:120px;text-align:center;top:98px;font-size:12px;font-weight:bold">0,60</div><div class="a" style="left:367px;top:118px;width:1px;height:2px;background:#000"></div><div class="a" style="left:385px;top:116px;width:1px;height:4px;background:#000"></div><div class="t" style="left:326.5px;width:120px;text-align:center;top:98px;font-size:12px;font-weight:bold">0,70</div><div class="a" style="left:403px;top:118px;width:1px;height:2px;background:#000"></div><div class="a" style="left:420px;top:116px;width:1px;height:4px;background:#000"></div><div class="t" style="left:361.9px;width:120px;text-align:center;top:98px;font-size:12px;font-weight:bold">0,80</div><div class="a" style="left:438px;top:118px;width:1px;height:2px;background:#000"></div><div class="a" style="left:456px;top:116px;width:1px;height:4px;background:#000"></div><div class="t" style="left:397.3px;width:120px;text-align:center;top:98px;font-size:12px;font-weight:bold">0,90</div><div class="a" style="left:474px;top:118px;width:1px;height:2px;background:#000"></div><div class="a" style="left:491px;top:116px;width:1px;height:4px;background:#000"></div><div class="t" style="left:432.7px;width:120px;text-align:center;top:98px;font-size:12px;font-weight:bold">1,00</div><div class="a" style="left:509px;top:118px;width:1px;height:2px;background:#000"></div><div class="a" style="left:527px;top:116px;width:1px;height:4px;background:#000"></div><div class="t" style="left:468.1px;width:120px;text-align:center;top:98px;font-size:12px;font-weight:bold">1,10</div><div class="a" style="left:544px;top:118px;width:1px;height:2px;background:#000"></div><div class="a" style="left:562px;top:116px;width:1px;height:4px;background:#000"></div><div class="t" style="left:503.5px;width:120px;text-align:center;top:98px;font-size:12px;font-weight:bold">1,20</div><div class="a" style="left:580px;top:118px;width:1px;height:2px;background:#000"></div><div class="a" style="left:597px;top:116px;width:1px;height:4px;background:#000"></div><div class="t" style="left:539.0px;width:120px;text-align:center;top:98px;font-size:12px;font-weight:bold">1,30</div><div class="a" style="left:615px;top:118px;width:1px;height:2px;background:#000"></div><div class="a" style="left:633px;top:116px;width:1px;height:4px;background:#000"></div><div class="t" style="left:574.4px;width:120px;text-align:center;top:98px;font-size:12px;font-weight:bold">1,40</div><div class="a" style="left:651px;top:118px;width:1px;height:2px;background:#000"></div><div class="a" style="left:668px;top:116px;width:1px;height:4px;background:#000"></div><div class="t" style="left:609.8px;width:120px;text-align:center;top:98px;font-size:12px;font-weight:bold">1,50</div><div class="a" style="left:686px;top:118px;width:1px;height:2px;background:#000"></div><div class="a" style="left:704px;top:116px;width:1px;height:4px;background:#000"></div><div class="t" style="left:645.2px;width:120px;text-align:center;top:98px;font-size:12px;font-weight:bold">1,60</div><div class="a" style="left:721px;top:118px;width:1px;height:2px;background:#000"></div><div class="a" style="left:739px;top:116px;width:1px;height:4px;background:#000"></div><div class="t" style="left:680.6px;width:120px;text-align:center;top:98px;font-size:12px;font-weight:bold">1,70</div><div class="a" style="left:757px;top:118px;width:1px;height:2px;background:#000"></div><div class="a" style="left:774px;top:116px;width:1px;height:4px;background:#000"></div><div class="t" style="left:716.0px;width:120px;text-align:center;top:98px;font-size:12px;font-weight:bold">1,80</div><div class="a" style="left:792px;top:118px;width:1px;height:2px;background:#000"></div><div class="a" style="left:810px;top:116px;width:1px;height:4px;background:#000"></div><div class="t" style="left:751.4px;width:120px;text-align:center;top:98px;font-size:12px;font-weight:bold">1,90</div><div class="a" style="left:828px;top:118px;width:1px;height:2px;background:#000"></div><div class="a" style="left:845px;top:116px;width:1px;height:4px;background:#000"></div><div class="t" style="left:786.8px;width:120px;text-align:center;top:98px;font-size:12px;font-weight:bold">2,00</div><div class="a" style="left:863px;top:118px;width:1px;height:2px;background:#000"></div><div class="a" style="left:881px;top:116px;width:1px;height:4px;background:#000"></div><div class="t" style="left:822.2px;width:120px;text-align:center;top:98px;font-size:12px;font-weight:bold">2,10</div><div class="a" style="left:898px;top:118px;width:1px;height:2px;background:#000"></div><div class="a" style="left:916px;top:116px;width:1px;height:4px;background:#000"></div><div class="t" style="left:857.6px;width:120px;text-align:center;top:98px;font-size:12px;font-weight:bold">2,20</div><div class="a" style="left:934px;top:118px;width:1px;height:2px;background:#000"></div><div class="a" style="left:951px;top:116px;width:1px;height:4px;background:#000"></div><div class="t" style="left:893.0px;width:120px;text-align:center;top:98px;font-size:12px;font-weight:bold">2,30</div><div class="a" style="left:969px;top:118px;width:1px;height:2px;background:#000"></div><div class="a" style="left:987px;top:116px;width:1px;height:4px;background:#000"></div><div class="t" style="left:928.4px;width:120px;text-align:center;top:98px;font-size:12px;font-weight:bold">2,40</div><div class="a" style="left:1005px;top:118px;width:1px;height:2px;background:#000"></div><div class="a" style="left:1022px;top:116px;width:1px;height:4px;background:#000"></div><div class="t" style="left:963.8px;width:120px;text-align:center;top:98px;font-size:12px;font-weight:bold">2,50</div><div class="a" style="left:1040px;top:118px;width:1px;height:2px;background:#000"></div><div class="a" style="left:1058px;top:116px;width:1px;height:4px;background:#000"></div><div class="t" style="left:999.2px;width:120px;text-align:center;top:98px;font-size:12px;font-weight:bold">2,60</div><div class="a" style="left:1075px;top:118px;width:1px;height:2px;background:#000"></div><div class="a" style="left:1093px;top:116px;width:1px;height:4px;background:#000"></div><div class="t" style="left:1034.6px;width:120px;text-align:center;top:98px;font-size:12px;font-weight:bold">2,70</div><div class="a" style="left:1111px;top:118px;width:1px;height:2px;background:#000"></div><div class="a" style="left:1129px;top:116px;width:1px;height:4px;background:#000"></div><div class="t" style="left:1070.0px;width:120px;text-align:center;top:98px;font-size:12px;font-weight:bold">2,80</div><div class="a" style="left:1146px;top:118px;width:1px;height:2px;background:#000"></div><div class="a" style="left:1164px;top:116px;width:1px;height:4px;background:#000"></div><div class="t" style="left:1105.4px;width:120px;text-align:center;top:98px;font-size:12px;font-weight:bold">2,90</div><div class="a" style="left:1182px;top:118px;width:1px;height:2px;background:#000"></div><div class="a" style="left:1199px;top:116px;width:1px;height:4px;background:#000"></div><div class="t" style="left:1140.8px;width:120px;text-align:center;top:98px;font-size:12px;font-weight:bold">3,00</div><div class="a" style="left:1217px;top:118px;width:1px;height:2px;background:#000"></div><div class="a" style="left:1235px;top:116px;width:1px;height:4px;background:#000"></div><div class="t" style="left:1176.2px;width:120px;text-align:center;top:98px;font-size:12px;font-weight:bold">3,10</div><div class="a" style="left:1252px;top:118px;width:1px;height:2px;background:#000"></div><div class="a" style="left:1270px;top:116px;width:1px;height:4px;background:#000"></div><div class="t" style="left:1211.6px;width:120px;text-align:center;top:98px;font-size:12px;font-weight:bold">3,20</div><div class="a" style="left:1288px;top:118px;width:1px;height:2px;background:#000"></div><div class="a" style="left:1306px;top:116px;width:1px;height:4px;background:#000"></div><div class="t" style="left:1247.0px;width:120px;text-align:center;top:98px;font-size:12px;font-weight:bold">3,30</div><div class="a" style="left:1323px;top:118px;width:1px;height:2px;background:#000"></div><div class="a" style="left:1341px;top:116px;width:1px;height:4px;background:#000"></div><div class="t" style="left:1282.4px;width:120px;text-align:center;top:98px;font-size:12px;font-weight:bold">3,40</div><div class="a" style="left:1359px;top:118px;width:1px;height:2px;background:#000"></div><div class="a" style="left:1376px;top:116px;width:1px;height:4px;background:#000"></div><div class="t" style="left:1317.8px;width:120px;text-align:center;top:98px;font-size:12px;font-weight:bold">3,50</div><div class="a" style="left:1394px;top:118px;width:1px;height:2px;background:#000"></div><div class="a" style="left:1412px;top:116px;width:1px;height:4px;background:#000"></div><div class="t" style="left:1353.2px;width:120px;text-align:center;top:98px;font-size:12px;font-weight:bold">3,60</div><div class="a" style="left:1429px;top:118px;width:1px;height:2px;background:#000"></div><div class="a" style="left:1447px;top:116px;width:1px;height:4px;background:#000"></div><div class="t" style="left:1388.6px;width:120px;text-align:center;top:98px;font-size:12px;font-weight:bold">3,70</div><div class="a" style="left:1465px;top:118px;width:1px;height:2px;background:#000"></div><div class="a" style="left:1483px;top:116px;width:1px;height:4px;background:#000"></div><div class="t" style="left:1424.1px;width:120px;text-align:center;top:98px;font-size:12px;font-weight:bold">3,80</div><div class="a" style="left:1500px;top:118px;width:1px;height:2px;background:#000"></div><div class="a" style="left:1518px;top:116px;width:1px;height:4px;background:#000"></div><div class="t" style="left:1459.5px;width:120px;text-align:center;top:98px;font-size:12px;font-weight:bold">3,90</div><div class="a" style="left:1536px;top:118px;width:1px;height:2px;background:#000"></div><div class="a" style="left:1553px;top:116px;width:1px;height:4px;background:#000"></div><div class="t" style="left:1494.9px;width:120px;text-align:center;top:98px;font-size:12px;font-weight:bold">4,00</div><div class="a" style="left:1571px;top:118px;width:1px;height:2px;background:#000"></div><div class="a" style="left:1589px;top:116px;width:1px;height:4px;background:#000"></div><div class="t" style="left:1530.3px;width:120px;text-align:center;top:98px;font-size:12px;font-weight:bold">4,10</div><div class="a" style="left:1606px;top:118px;width:1px;height:2px;background:#000"></div><div class="a" style="left:1624px;top:116px;width:1px;height:4px;background:#000"></div><div class="t" style="left:1565.7px;width:120px;text-align:center;top:98px;font-size:12px;font-weight:bold">4,20</div><div class="a" style="left:1642px;top:118px;width:1px;height:2px;background:#000"></div><div class="a" style="left:1660px;top:116px;width:1px;height:4px;background:#000"></div><div class="t" style="left:1601.1px;width:120px;text-align:center;top:98px;font-size:12px;font-weight:bold">4,30</div><div class="a" style="left:1677px;top:118px;width:1px;height:2px;background:#000"></div><div class="a" style="left:1695px;top:116px;width:1px;height:4px;background:#000"></div><div class="t" style="left:1636.5px;width:120px;text-align:center;top:98px;font-size:12px;font-weight:bold">4,40</div><div class="a" style="left:1713px;top:118px;width:1px;height:2px;background:#000"></div><div class="a" style="left:1730px;top:116px;width:1px;height:4px;background:#000"></div><div class="t" style="left:1671.9px;width:120px;text-align:center;top:98px;font-size:12px;font-weight:bold">4,50</div><div class="a" style="left:1748px;top:118px;width:1px;height:2px;background:#000"></div><div class="a" style="left:1766px;top:116px;width:1px;height:4px;background:#000"></div><div class="t" style="left:1707.3px;width:120px;text-align:center;top:98px;font-size:12px;font-weight:bold">4,60</div><div class="a" style="left:1783px;top:118px;width:1px;height:2px;background:#000"></div><div class="a" style="left:1801px;top:116px;width:1px;height:4px;background:#000"></div><div class="t" style="left:1742.7px;width:120px;text-align:center;top:98px;font-size:12px;font-weight:bold">4,70</div><div class="a" style="left:1819px;top:118px;width:1px;height:2px;background:#000"></div><div class="a" style="left:1837px;top:116px;width:1px;height:4px;background:#000"></div><div class="t" style="left:1778.1px;width:120px;text-align:center;top:98px;font-size:12px;font-weight:bold">4,80</div><div class="a" style="left:1854px;top:118px;width:1px;height:2px;background:#000"></div><div class="a" style="left:1872px;top:116px;width:1px;height:4px;background:#000"></div><div class="t" style="left:1813.5px;width:120px;text-align:center;top:98px;font-size:12px;font-weight:bold">4,90</div><div class="a" style="left:1890px;top:118px;width:1px;height:2px;background:#000"></div>
<div class="a" style="left:136px;top:96px;width:1px;height:25px;background:#000"></div>
<svg class="a" style="left:137px;top:107px" width="9" height="14"><path d="M0.5 7 L7.5 0.5 V13.5Z" fill="#d4d4d4" stroke="#909090"/></svg>
<div class="a" style="left:0;top:121px;width:1904px;height:822px;background:#808080"></div>
<div class="a" style="left:0;top:122px;width:1904px;height:1px;background:#000"></div>
<div class="a" style="left:4px;top:127px;width:1896px;height:146px;background:#000"></div>
<div class="a" style="left:5px;top:128px;width:95px;height:143px;background:#ccccdc"></div>
<div class="a" style="left:5px;top:128px;width:15px;height:15px;border-left:1px solid #fff;border-top:1px solid #fff;border-right:1px solid #000;background:#ccccdc"></div>
<svg class="a" style="left:8px;top:131px" width="10" height="9"><path d="M1 1L9 8M9 1L1 8" stroke="#000" stroke-width="1.5"/></svg>
<div class="a" style="left:21px;top:128px;width:79px;height:15px;border-left:1px solid #fff;border-top:1px solid #fff;background:#ccccdc"></div>
<div class="t" style="left:23px;top:131px;font-size:10.5px">AchKommS</div>
<svg class="a" style="left:83px;top:131px" width="12" height="7"><path d="M0 0H12L6 7Z" fill="#000"/></svg>
<div class="a" style="left:5px;top:143px;width:95px;height:1px;background:#000"></div>
<div class="a" style="left:5px;top:144px;width:94px;height:1px;background:#fff"></div>
<div class="a" style="left:5px;top:144px;width:1px;height:127px;background:#fff"></div>
<div class="t" style="left:8px;top:147px;font-size:10.5px;color:#202020">Mono, 44100Hz</div>
<div class="t" style="left:8px;top:163px;font-size:10.5px;color:#202020">16-bit PCM</div>
<div class="a" style="left:13px;top:178px;width:35px;height:15px;border:1px solid;border-color:#fff #808080 #808080 #fff;background:#ccccdc;text-align:center;line-height:13px;font-size:10.5px">Stumm</div>
<div class="a" style="left:57px;top:178px;width:35px;height:15px;border:1px solid;border-color:#fff #808080 #808080 #fff;background:#ccccdc;text-align:center;line-height:13px;font-size:10.5px">Solo</div>
<div class="a" style="left:16px;top:214px;width:75px;height:1px;background:#808080"></div>
<div class="a" style="left:16px;top:215px;width:75px;height:1px;background:#fff"></div>
<div class="a" style="left:17px;top:208px;width:1px;height:4px;background:#fff;box-shadow:1px 0 #909090"></div>
<div class="a" style="left:24px;top:209px;width:1px;height:3px;background:#fff;box-shadow:1px 0 #909090"></div>
<div class="a" style="left:31px;top:209px;width:1px;height:3px;background:#fff;box-shadow:1px 0 #909090"></div>
<div class="a" style="left:38px;top:209px;width:1px;height:3px;background:#fff;box-shadow:1px 0 #909090"></div>
<div class="a" style="left:46px;top:209px;width:1px;height:3px;background:#fff;box-shadow:1px 0 #909090"></div>
<div class="a" style="left:53px;top:209px;width:1px;height:3px;background:#fff;box-shadow:1px 0 #909090"></div>
<div class="a" style="left:60px;top:209px;width:1px;height:3px;background:#fff;box-shadow:1px 0 #909090"></div>
<div class="a" style="left:67px;top:209px;width:1px;height:3px;background:#fff;box-shadow:1px 0 #909090"></div>
<div class="a" style="left:75px;top:209px;width:1px;height:3px;background:#fff;box-shadow:1px 0 #909090"></div>
<div class="a" style="left:82px;top:209px;width:1px;height:3px;background:#fff;box-shadow:1px 0 #909090"></div>
<div class="a" style="left:89px;top:208px;width:1px;height:4px;background:#fff;box-shadow:1px 0 #909090"></div>
<svg class="a" style="left:47px;top:206px" width="13" height="15"><path d="M1 3 Q1 1 3 1H9Q11 1 11 3V9L6 14L1 9Z" fill="#c8c8e4" stroke="#000" stroke-width="0.9"/><path d="M4 5H8M4 7H8M4 9H8" stroke="#fff" stroke-width="0.8"/></svg>
<div class="a" style="left:16px;top:203px;width:5px;height:1px;background:#000"></div>
<svg class="a" style="left:82px;top:201px" width="6" height="6"><path d="M0 3H5M2.5 0.5V5.5" stroke="#000"/></svg>
<div class="a" style="left:16px;top:244px;width:75px;height:1px;background:#808080"></div>
<div class="a" style="left:16px;top:245px;width:75px;height:1px;background:#fff"></div>
<div class="a" style="left:17px;top:238px;width:1px;height:4px;background:#fff;box-shadow:1px 0 #909090"></div>
<div class="a" style="left:24px;top:239px;width:1px;height:3px;background:#fff;box-shadow:1px 0 #909090"></div>
<div class="a" style="left:31px;top:239px;width:1px;height:3px;background:#fff;box-shadow:1px 0 #909090"></div>
<div class="a" style="left:38px;top:239px;width:1px;height:3px;background:#fff;box-shadow:1px 0 #909090"></div>
<div class="a" style="left:46px;top:239px;width:1px;height:3px;background:#fff;box-shadow:1px 0 #909090"></div>
<div class="a" style="left:53px;top:239px;width:1px;height:3px;background:#fff;box-shadow:1px 0 #909090"></div>
<div class="a" style="left:60px;top:239px;width:1px;height:3px;background:#fff;box-shadow:1px 0 #909090"></div>
<div class="a" style="left:67px;top:239px;width:1px;height:3px;background:#fff;box-shadow:1px 0 #909090"></div>
<div class="a" style="left:75px;top:239px;width:1px;height:3px;background:#fff;box-shadow:1px 0 #909090"></div>
<div class="a" style="left:82px;top:239px;width:1px;height:3px;background:#fff;box-shadow:1px 0 #909090"></div>
<div class="a" style="left:89px;top:238px;width:1px;height:4px;background:#fff;box-shadow:1px 0 #909090"></div>
<svg class="a" style="left:47px;top:236px" width="13" height="15"><path d="M1 3 Q1 1 3 1H9Q11 1 11 3V9L6 14L1 9Z" fill="#c8c8e4" stroke="#000" stroke-width="0.9"/><path d="M4 5H8M4 7H8M4 9H8" stroke="#fff" stroke-width="0.8"/></svg>
<div class="t" style="left:16px;top:230px;font-size:13px;color:#000">L</div>
<div class="t" style="left:82px;top:230px;font-size:13px;color:#000">R</div>
<div class="a" style="left:6px;top:255px;width:92px;height:15px;border-top:1px solid #fff;border-left:1px solid #fff;border-right:1px solid #a0a0b0"></div>
<svg class="a" style="left:47px;top:258px" width="11" height="9"><path d="M5.5 1L10 8H1Z" fill="#b0b0b0" stroke="#000"/></svg>
<div class="a" style="left:100px;top:128px;width:36px;height:143px;background:#ccccdc;border-left:1px solid #000;box-shadow:inset 1px 0 #fff"></div>
<div class="t" style="left:90px;width:40px;text-align:right;top:130.4px;font-size:11.5px;font-weight:bold">1,0</div>
<div class="t" style="left:90px;width:40px;text-align:right;top:159.4px;font-size:11.5px;font-weight:normal">0,5</div>
<div class="t" style="left:90px;width:40px;text-align:right;top:194px;font-size:11.5px;font-weight:bold">0,0</div>
<div class="t" style="left:90px;width:40px;text-align:right;top:230px;font-size:11.5px;font-weight:normal">-0,5</div>
<div class="t" style="left:90px;width:40px;text-align:right;top:257px;font-size:11.5px;font-weight:bold">-1,0</div>
<div class="a" style="left:132px;top:164px;width:4px;height:1px;background:#000"></div>
<div class="a" style="left:132px;top:199px;width:4px;height:1px;background:#000"></div>
<div class="a" style="left:132px;top:235px;width:4px;height:1px;background:#000"></div>
<div class="a" style="left:137px;top:128px;width:876px;height:143px;background:#c0c0c0"></div>
<div class="a" style="left:1012px;top:128px;width:1px;height:143px;background:#808080"></div>
<div class="a" style="left:1013px;top:128px;width:885px;height:143px;background:#d6d6d6"></div>
<svg class="a" style="left:0;top:0" width="1916" height="300" shape-rendering="crispEdges"><path d="M137.5 198.1V201.3M138.5 197.1V201.8M139.5 197.7V201.0M140.5 196.6V202.0M141.5 197.1V201.5M142.5 196.4V202.3M143.5 197.6V201.9M144.5 196.3V202.6M145.5 197.2V202.0M146.5 193.2V206.2M147.5 189.5V209.0M148.5 178.6V221.6M149.5 178.6V211.7M150.5 172.0V227.8M151.5 159.0V245.0M152.5 159.1V236.6M153.5 137.0V249.0M154.5 165.1V236.7M155.5 179.2V219.8M156.5 165.5V229.2M157.5 175.4V214.7M158.5 166.6V225.3M159.5 177.0V219.9M160.5 172.8V224.2M161.5 174.8V223.2M162.5 173.1V223.0M163.5 184.4V215.9M164.5 174.8V224.1M165.5 180.4V217.3M166.5 176.7V222.2M167.5 188.6V210.4M168.5 178.4V219.2M169.5 189.1V212.0M170.5 189.1V210.7M171.5 189.7V214.7M172.5 180.9V216.5M173.5 189.5V213.3M174.5 180.7V216.7M175.5 191.8V210.3M176.5 190.8V208.8M177.5 189.7V210.7M178.5 184.6V215.0M179.5 189.7V206.8M180.5 188.3V210.7M181.5 191.0V209.1M182.5 191.1V205.7M183.5 195.1V203.9M184.5 195.7V203.6M185.5 196.9V202.3M186.5 197.2V201.7M187.5 197.6V201.6M188.5 196.8V202.1M189.5 198.0V201.6M190.5 196.7V202.3M191.5 197.6V201.1M192.5 197.5V201.8M193.5 197.8V201.3M194.5 196.6V202.3M195.5 197.0V201.4M196.5 196.2V202.5M197.5 197.3V201.7M198.5 196.5V202.4M199.5 196.0V203.8M200.5 190.2V210.2M201.5 190.5V207.6M202.5 182.0V217.2M203.5 177.3V219.8M204.5 174.0V222.8M205.5 175.9V220.7M206.5 167.5V226.6M207.5 184.8V209.6M208.5 180.9V216.7M209.5 190.5V207.9M210.5 190.7V212.8M211.5 174.7V222.5M212.5 149.3V247.7M213.5 143.5V234.6M214.5 127.5V271.5M215.5 156.2V271.5M216.5 127.5V271.5M217.5 153.0V256.5M218.5 127.5V271.5M219.5 153.7V244.1M220.5 127.5V271.5M221.5 127.5V271.5M222.5 127.5V271.5M223.5 150.6V263.5M224.5 127.5V271.5M225.5 143.5V271.5M226.5 127.5V271.5M227.5 155.3V270.7M228.5 127.5V271.5M229.5 127.5V271.5M230.5 127.5V271.5M231.5 134.2V256.4M232.5 127.5V271.5M233.5 152.2V243.9M234.5 148.5V249.1M235.5 153.3V255.9M236.5 142.4V246.4M237.5 153.4V234.8M238.5 128.6V265.6M239.5 164.8V229.9M240.5 151.7V250.2M241.5 171.8V229.8M242.5 165.7V227.8M243.5 172.9V223.9M244.5 182.4V217.8M245.5 183.9V216.5M246.5 183.9V221.4M247.5 187.4V212.9M248.5 179.9V231.8M249.5 185.1V221.9M250.5 178.0V232.6M251.5 185.4V214.0M252.5 181.6V227.2M253.5 185.1V222.7M254.5 180.3V227.5M255.5 186.1V212.0M256.5 179.7V223.1M257.5 190.5V212.7M258.5 179.3V222.1M259.5 185.9V212.0M260.5 173.8V228.2M261.5 180.1V222.2M262.5 174.0V231.1M263.5 184.7V219.2M264.5 166.3V230.9M265.5 182.2V225.4M266.5 171.0V232.8M267.5 183.3V219.5M268.5 165.7V237.3M269.5 174.0V219.8M270.5 164.0V237.2M271.5 181.6V217.3M272.5 164.5V236.1M273.5 182.7V223.1M274.5 177.3V232.0M275.5 175.7V218.8M276.5 163.7V242.2M277.5 171.1V220.3M278.5 164.6V243.6M279.5 172.9V223.4M280.5 163.3V238.8M281.5 161.6V246.0M282.5 161.7V239.3M283.5 179.6V222.6M284.5 155.0V244.1M285.5 172.7V224.5M286.5 160.5V245.6M287.5 171.1V232.0M288.5 160.8V239.9M289.5 167.3V218.4M290.5 156.2V239.1M291.5 176.8V229.9M292.5 180.1V217.0M293.5 175.8V226.4M294.5 166.8V230.1M295.5 177.9V215.0M296.5 175.5V222.5M297.5 185.0V209.6M298.5 184.1V214.3M299.5 194.7V205.4M300.5 190.9V206.2M301.5 185.6V211.0M302.5 176.5V221.5M303.5 178.9V221.0M304.5 165.5V230.9M305.5 170.3V224.9M306.5 156.4V232.4M307.5 178.2V224.8M308.5 162.1V231.2M309.5 166.3V216.5M310.5 153.9V230.1M311.5 174.3V225.8M312.5 152.5V235.3M313.5 164.7V223.4M314.5 157.2V230.7M315.5 179.8V217.4M316.5 151.8V229.2M317.5 172.9V214.4M318.5 152.8V228.8M319.5 157.8V232.8M320.5 161.6V227.5M321.5 168.5V224.1M322.5 153.6V230.9M323.5 175.8V216.5M324.5 154.6V230.7M325.5 177.6V218.5M326.5 162.0V228.2M327.5 158.2V229.4M328.5 160.8V226.1M329.5 171.7V212.6M330.5 165.4V223.3M331.5 179.2V220.7M332.5 168.4V222.1M333.5 178.7V212.6M334.5 165.8V224.1M335.5 183.7V217.4M336.5 169.7V223.7M337.5 183.2V211.3M338.5 171.7V222.0M339.5 184.3V217.1M340.5 172.6V224.1M341.5 174.5V220.6M342.5 179.0V213.3M343.5 186.0V216.8M344.5 175.6V223.1M345.5 188.3V211.6M346.5 179.1V220.3M347.5 186.9V210.9M348.5 183.1V220.8M349.5 191.4V213.2M350.5 188.2V220.6M351.5 192.4V215.9M352.5 187.8V219.0M353.5 188.2V220.1M354.5 186.5V218.7M355.5 190.0V211.7M356.5 187.5V219.2M357.5 191.2V210.9M358.5 188.2V218.4M359.5 191.8V213.7M360.5 188.7V219.7M361.5 193.8V214.3M362.5 190.5V208.9M363.5 192.3V213.4M364.5 188.6V216.8M365.5 193.6V209.2M366.5 187.9V217.8M367.5 187.8V216.8M368.5 188.3V216.8M369.5 192.3V210.0M370.5 188.3V215.1M371.5 192.5V208.1M372.5 189.6V215.3M373.5 192.6V207.0M374.5 188.7V215.9M375.5 192.9V208.7M376.5 188.9V216.0M377.5 188.9V214.1M378.5 189.5V215.2M379.5 192.6V206.9M380.5 190.0V212.3M381.5 191.2V213.1M382.5 191.6V211.9M383.5 192.8V206.4M384.5 191.4V212.7M385.5 194.1V209.5M386.5 194.8V208.9M387.5 195.0V208.5M388.5 192.0V210.1M389.5 194.6V209.0M390.5 192.9V209.5M391.5 194.6V206.4M392.5 192.9V210.7M393.5 195.1V204.9M394.5 192.2V210.2M395.5 194.7V204.9M396.5 192.7V208.8M397.5 194.8V205.2M398.5 191.8V209.0M399.5 193.2V206.6M400.5 190.8V209.3M401.5 191.6V204.6M402.5 188.1V211.5M403.5 188.7V206.2M404.5 185.2V214.2M405.5 191.5V211.3M406.5 180.1V216.6M407.5 188.8V208.7M408.5 177.9V222.8M409.5 184.9V214.3M410.5 177.6V226.3M411.5 180.3V212.5M412.5 171.7V233.1M413.5 176.2V218.7M414.5 176.0V224.8M415.5 171.8V227.1M416.5 158.6V241.1M417.5 170.4V220.4M418.5 158.9V241.6M419.5 175.1V222.0M420.5 148.4V251.7M421.5 166.4V229.0M422.5 176.6V238.7M423.5 155.2V245.2M424.5 167.1V237.9M425.5 177.1V223.9M426.5 155.5V248.5M427.5 173.5V235.4M428.5 147.6V248.6M429.5 177.4V229.1M430.5 152.7V249.9M431.5 161.2V222.7M432.5 155.3V243.9M433.5 153.2V243.1M434.5 160.3V234.8M435.5 173.4V216.0M436.5 174.7V219.7M437.5 186.2V210.3M438.5 185.8V211.4M439.5 183.9V211.9M440.5 183.6V215.0M441.5 184.7V216.8M442.5 183.9V217.7M443.5 187.5V214.0M444.5 184.0V223.0M445.5 189.4V217.9M446.5 184.2V224.2M447.5 191.2V212.8M448.5 184.6V223.2M449.5 191.4V220.1M450.5 181.5V226.6M451.5 190.7V217.6M452.5 183.4V223.2M453.5 187.5V216.8M454.5 184.1V227.4M455.5 186.2V216.4M456.5 183.6V224.7M457.5 188.0V220.1M458.5 184.2V224.4M459.5 190.1V218.7M460.5 185.6V224.1M461.5 190.6V217.0M462.5 185.0V225.1M463.5 188.2V210.6M464.5 185.4V224.9M465.5 190.7V214.4M466.5 186.6V222.7M467.5 189.5V210.7M468.5 187.0V217.7M469.5 193.9V210.2M470.5 189.1V216.2M471.5 194.3V207.1M472.5 195.2V207.8M473.5 196.2V205.4M474.5 194.7V204.3M475.5 195.3V203.0M476.5 195.5V202.9M477.5 195.0V202.8M478.5 195.3V202.9M479.5 196.9V201.7M480.5 195.1V203.5M481.5 195.8V202.7M482.5 196.0V201.8M483.5 197.1V201.7M484.5 195.1V203.5M485.5 195.8V202.3M486.5 196.8V203.2M487.5 195.9V203.3M488.5 194.4V204.3M489.5 195.5V202.9M490.5 187.6V212.4M491.5 184.9V217.9M492.5 157.8V232.5M493.5 170.8V226.3M494.5 153.0V242.2M495.5 163.6V217.8M496.5 138.2V238.5M497.5 162.9V232.0M498.5 141.4V238.6M499.5 164.4V225.7M500.5 145.7V238.6M501.5 142.1V238.1M502.5 146.9V242.7M503.5 169.8V221.7M504.5 147.5V240.4M505.5 160.7V224.6M506.5 157.3V234.2M507.5 167.5V227.0M508.5 154.7V236.3M509.5 169.6V218.2M510.5 156.7V230.8M511.5 170.1V226.3M512.5 158.6V234.0M513.5 178.5V218.9M514.5 162.4V233.1M515.5 183.2V214.4M516.5 162.7V228.0M517.5 177.4V222.2M518.5 168.6V224.3M519.5 183.8V211.8M520.5 172.2V228.1M521.5 173.7V226.1M522.5 173.5V221.9M523.5 178.4V217.3M524.5 172.2V222.9M525.5 178.7V216.3M526.5 174.4V223.4M527.5 182.3V210.8M528.5 179.1V220.1M529.5 184.0V210.1M530.5 178.3V219.6M531.5 185.0V214.2M532.5 182.5V214.4M533.5 186.8V208.3M534.5 189.1V207.3M535.5 185.2V211.6M536.5 188.4V209.3M537.5 190.9V206.6M538.5 191.8V204.5M539.5 193.4V204.2M540.5 192.0V204.6M541.5 193.8V202.1M542.5 193.2V203.4M543.5 195.0V202.0M544.5 196.4V201.9M545.5 195.2V203.7M546.5 190.6V211.8M547.5 191.8V210.9M548.5 183.6V219.5M549.5 188.0V210.3M550.5 183.6V218.7M551.5 188.8V214.2M552.5 182.4V224.0M553.5 189.4V210.2M554.5 182.3V220.5M555.5 178.0V225.3M556.5 179.6V221.6M557.5 185.3V216.7M558.5 178.1V224.2M559.5 187.3V211.5M560.5 174.8V227.2M561.5 182.8V217.6M562.5 179.7V225.2M563.5 187.6V215.7M564.5 180.1V221.5M565.5 189.3V211.9M566.5 182.6V222.7M567.5 184.7V211.2M568.5 190.4V212.7M569.5 187.6V212.5M570.5 182.5V217.9M571.5 187.6V212.3M572.5 183.8V216.6M573.5 184.9V217.2M574.5 182.4V214.9M575.5 191.3V210.0M576.5 185.5V214.7M577.5 192.2V208.0M578.5 184.4V213.1M579.5 188.7V207.5M580.5 184.6V212.7M581.5 188.3V206.7M582.5 186.7V213.4M583.5 192.7V206.0M584.5 186.6V211.8M585.5 189.1V208.5M586.5 185.4V212.3M587.5 189.3V207.2M588.5 187.6V213.7M589.5 187.2V213.5M590.5 186.8V212.9M591.5 191.4V208.1M592.5 186.0V213.6M593.5 191.9V209.3M594.5 191.5V208.1M595.5 193.7V210.3M596.5 188.6V211.9M597.5 193.6V209.0M598.5 187.7V212.8M599.5 193.7V209.9M600.5 189.1V212.6M601.5 193.6V207.6M602.5 187.1V211.6M603.5 193.3V209.6M604.5 188.0V213.6M605.5 189.8V209.4M606.5 188.0V212.4M607.5 190.3V209.8M608.5 186.3V213.8M609.5 191.0V207.4M610.5 187.4V212.7M611.5 189.2V209.5M612.5 186.0V213.9M613.5 190.4V207.1M614.5 186.4V214.2M615.5 190.8V208.0M616.5 186.7V213.6M617.5 188.3V208.6M618.5 185.7V212.3M619.5 191.5V208.1M620.5 186.7V213.7M621.5 190.0V209.5M622.5 185.6V213.9M623.5 191.4V207.4M624.5 185.9V214.2M625.5 188.5V207.5M626.5 186.1V215.6M627.5 192.2V206.7M628.5 186.8V213.9M629.5 192.4V207.6M630.5 187.5V212.7M631.5 192.0V208.2M632.5 190.5V208.5M633.5 194.5V204.0M634.5 194.9V202.7M635.5 197.3V201.5M636.5 196.4V201.9M637.5 197.6V201.1M638.5 197.0V201.8M639.5 197.6V201.4M640.5 196.9V202.2M641.5 196.9V201.5M642.5 194.6V204.4M643.5 196.0V204.0M644.5 188.7V208.7M645.5 186.2V212.6M646.5 168.8V221.2M647.5 176.6V223.0M648.5 159.2V230.8M649.5 169.3V225.2M650.5 154.2V233.4M651.5 168.8V225.0M652.5 146.7V235.6M653.5 160.9V224.0M654.5 169.2V217.2M655.5 167.5V217.7M656.5 149.2V232.8M657.5 176.8V220.4M658.5 149.4V229.9M659.5 165.9V217.4M660.5 156.1V233.7M661.5 173.5V215.4M662.5 163.3V227.5M663.5 171.4V219.7M664.5 169.5V229.3M665.5 182.0V212.9M666.5 172.0V222.0M667.5 187.0V208.4M668.5 181.6V214.2M669.5 193.8V208.7M670.5 188.8V209.8M671.5 190.7V206.1M672.5 188.3V210.3M673.5 189.8V206.4M674.5 187.4V210.2M675.5 185.5V209.9M676.5 185.2V210.1M677.5 184.9V210.7M678.5 186.0V211.6M679.5 189.7V204.9M680.5 187.7V209.8M681.5 193.2V205.9M682.5 189.8V207.1M683.5 195.6V204.3M684.5 195.9V202.7M685.5 195.5V202.2M686.5 194.8V204.6M687.5 196.1V202.4M688.5 195.1V204.5M689.5 197.0V202.7M690.5 195.1V203.7M691.5 197.0V202.9M692.5 194.8V204.1M693.5 195.4V203.4M694.5 195.4V203.7M695.5 197.0V202.8M696.5 194.7V204.2M697.5 194.2V203.1M698.5 190.9V208.3M699.5 193.0V207.4M700.5 190.7V206.2M701.5 192.6V204.9M702.5 188.9V209.5M703.5 194.3V205.5M704.5 189.9V210.6M705.5 192.4V205.5M706.5 191.0V209.6M707.5 192.9V206.4M708.5 191.9V208.2M709.5 193.0V203.7M710.5 190.5V208.0M711.5 190.9V205.6M712.5 188.4V208.4M713.5 190.9V205.4M714.5 182.3V213.6M715.5 181.9V210.5M716.5 174.1V220.8M717.5 178.3V212.9M718.5 170.4V227.9M719.5 183.9V214.7M720.5 174.7V222.2M721.5 187.4V212.8M722.5 178.5V219.2M723.5 189.2V214.4M724.5 181.8V218.6M725.5 187.2V208.1M726.5 180.4V219.7M727.5 189.2V209.0M728.5 179.4V217.2M729.5 184.9V214.5M730.5 179.3V219.0M731.5 184.9V210.2M732.5 181.1V219.3M733.5 186.7V212.4M734.5 178.8V219.8M735.5 189.6V210.1M736.5 179.5V216.7M737.5 182.2V217.8M738.5 182.3V219.4M739.5 187.5V210.0M740.5 180.5V217.3M741.5 184.7V214.2M742.5 180.8V217.9M743.5 190.3V210.0M744.5 184.9V214.4M745.5 185.4V208.1M746.5 182.1V217.5M747.5 186.8V209.6M748.5 182.8V217.7M749.5 186.9V209.9M750.5 181.9V217.0M751.5 190.3V213.1M752.5 181.0V215.6M753.5 190.1V210.4M754.5 182.4V214.9M755.5 192.8V207.9M756.5 191.7V206.8M757.5 197.2V203.0M758.5 195.0V203.6M759.5 196.2V201.9M760.5 195.4V203.7M761.5 196.9V202.2M762.5 194.7V204.1M763.5 195.8V203.2M764.5 195.0V204.4M765.5 194.9V204.4M766.5 195.2V204.4M767.5 195.7V202.1M768.5 194.8V204.1M769.5 196.8V202.0M770.5 194.5V204.2M771.5 196.8V203.3M772.5 194.5V204.3M773.5 196.9V202.4M774.5 195.3V203.7M775.5 196.6V201.7M776.5 194.9V203.1M777.5 197.1V202.2M778.5 194.0V204.6M779.5 193.6V205.1M780.5 187.6V210.7M781.5 186.1V214.9M782.5 182.8V215.8M783.5 184.0V215.8M784.5 177.2V223.1M785.5 184.7V212.7M786.5 178.5V222.2M787.5 186.3V213.7M788.5 184.2V217.4M789.5 191.2V209.0M790.5 187.6V213.4M791.5 194.0V205.5M792.5 190.7V210.3M793.5 195.8V204.4M794.5 193.7V206.2M795.5 194.9V204.5M796.5 181.3V217.0M797.5 185.9V217.1M798.5 180.6V219.7M799.5 188.2V212.6M800.5 177.1V221.5M801.5 182.5V214.0M802.5 187.4V210.1M803.5 183.3V214.0M804.5 179.9V221.0M805.5 185.1V211.4M806.5 181.5V220.2M807.5 186.0V210.6M808.5 178.2V219.7M809.5 186.2V214.0M810.5 181.9V217.6M811.5 185.1V211.6M812.5 180.8V219.6M813.5 186.0V210.2M814.5 180.4V217.9M815.5 182.6V218.6M816.5 183.8V218.3M817.5 189.2V215.2M818.5 183.9V216.3M819.5 188.6V211.9M820.5 184.0V216.8M821.5 184.3V219.3M822.5 182.0V217.7M823.5 189.5V214.7M824.5 183.9V219.1M825.5 181.9V218.3M826.5 190.0V210.2M827.5 189.9V209.9M828.5 182.6V221.1M829.5 190.2V214.9M830.5 180.6V220.6M831.5 187.9V215.3M832.5 180.9V219.3M833.5 179.7V219.0M834.5 179.6V221.9M835.5 190.3V216.3M836.5 180.5V218.1M837.5 190.7V211.5M838.5 180.6V222.1M839.5 186.5V214.3M840.5 183.6V219.8M841.5 185.7V211.5M842.5 183.3V218.6M843.5 188.0V210.2M844.5 185.2V219.7M845.5 185.1V222.6M846.5 185.2V219.0M847.5 192.4V213.2M848.5 185.5V218.4M849.5 190.0V213.6M850.5 189.3V212.4M851.5 188.1V212.2M852.5 187.0V222.7M853.5 188.6V211.1M854.5 187.0V218.9M855.5 189.0V209.4M856.5 186.3V220.3M857.5 186.2V221.6M858.5 185.7V218.8M859.5 192.0V214.3M860.5 187.0V220.5M861.5 191.4V210.4M862.5 186.4V219.4M863.5 191.8V210.3M864.5 191.6V212.5M865.5 193.2V214.6M866.5 186.9V220.7M867.5 192.3V214.5M868.5 188.7V217.7M869.5 190.6V212.1M870.5 188.2V220.6M871.5 192.1V213.9M872.5 187.6V217.8M873.5 192.6V210.5M874.5 188.9V218.3M875.5 191.5V209.4M876.5 188.8V213.7M877.5 190.6V214.0M878.5 192.1V211.1M879.5 195.2V205.6M880.5 193.3V207.5M881.5 194.9V203.9M882.5 193.5V204.5M883.5 193.8V203.7M884.5 189.7V206.9M885.5 189.2V204.6M886.5 184.0V208.6M887.5 187.7V205.2M888.5 184.8V208.6M889.5 192.3V203.6M890.5 188.9V207.4M891.5 192.2V204.7M892.5 190.5V205.8M893.5 193.8V202.7M894.5 194.3V205.3M895.5 194.5V202.8M896.5 184.3V206.4M897.5 185.1V205.7M898.5 182.7V207.5M899.5 188.3V205.8M900.5 181.1V209.3M901.5 191.3V206.1M902.5 182.6V211.1M903.5 190.2V208.9M904.5 183.7V214.4M905.5 184.0V214.1M906.5 183.6V213.0M907.5 187.7V209.1M908.5 184.8V213.6M909.5 187.2V207.8M910.5 183.4V216.7M911.5 191.1V212.3M912.5 186.0V216.4M913.5 185.6V216.3M914.5 185.9V217.8M915.5 184.0V218.4M916.5 185.5V217.5M917.5 192.4V210.8M918.5 184.8V216.0M919.5 188.1V214.8M920.5 186.2V217.2M921.5 188.2V208.4M922.5 190.3V208.3M923.5 188.5V213.1M924.5 185.5V218.4M925.5 192.9V209.4M926.5 185.2V214.9M927.5 192.8V210.4M928.5 185.2V215.8M929.5 190.7V207.3M930.5 185.9V214.4M931.5 192.5V207.4M932.5 185.3V215.4M933.5 192.9V211.0M934.5 186.3V212.5M935.5 191.2V208.1M936.5 188.8V210.1M937.5 191.9V205.8M938.5 190.7V207.2M939.5 194.6V202.9M940.5 193.2V204.6M941.5 194.8V205.1M942.5 190.5V207.8M943.5 194.1V204.8M944.5 186.8V210.6M945.5 190.5V206.1M946.5 189.6V207.5M947.5 195.8V204.1M948.5 194.5V204.3M949.5 196.1V204.1M950.5 193.6V205.2M951.5 195.0V202.9M952.5 196.0V204.2M953.5 193.6V204.3M954.5 191.6V207.1M955.5 193.4V205.1M956.5 190.8V207.5M957.5 192.4V204.8M958.5 189.7V208.1M959.5 190.8V207.9M960.5 189.3V208.4M961.5 192.5V206.1M962.5 193.8V203.9M963.5 190.5V208.7M964.5 190.8V207.2M965.5 190.8V208.0M966.5 191.4V208.7M967.5 195.3V204.5M968.5 191.3V208.7M969.5 195.6V206.2M970.5 191.2V207.9M971.5 193.5V204.8M972.5 193.4V204.2M973.5 194.7V203.6M974.5 192.2V207.7M975.5 194.9V206.2M976.5 192.3V208.5M977.5 194.9V204.7M978.5 192.9V207.7M979.5 194.9V205.8M980.5 192.8V206.4M981.5 195.4V204.3M982.5 195.0V203.1M983.5 194.7V205.2M984.5 193.8V205.7M985.5 195.5V203.4M986.5 194.0V205.9M987.5 195.4V204.1M988.5 195.7V203.1M989.5 195.5V204.1M990.5 194.6V205.7M991.5 196.9V202.7M992.5 195.3V205.0M993.5 197.0V203.4M994.5 195.8V203.5M995.5 197.2V202.8M996.5 196.0V203.0M997.5 197.2V201.5M998.5 196.8V202.4M999.5 197.9V201.2M1000.5 197.3V201.9M1001.5 198.2V201.4M1002.5 197.0V201.7M1003.5 197.8V201.3M1004.5 197.1V201.6M1005.5 197.5V201.2M1006.5 197.2V202.0M1007.5 197.9V201.4M1008.5 197.1V201.8M1009.5 197.6V200.9M1010.5 197.2V201.8M1011.5 197.8V201.1" stroke="#3232c8" stroke-width="1"/><path d="M137.5 198.8V200.2M138.5 198.6V200.4M139.5 198.8V200.2M140.5 198.7V200.3M141.5 198.7V200.3M142.5 198.7V200.3M143.5 198.7V200.3M144.5 198.6V200.4M145.5 198.1V200.9M146.5 197.4V201.6M147.5 196.0V203.0M148.5 193.9V205.1M149.5 194.2V204.8M150.5 194.7V204.3M151.5 193.0V206.0M152.5 193.4V205.6M153.5 193.5V205.5M154.5 193.2V205.8M155.5 193.1V205.9M156.5 194.2V204.8M157.5 194.0V205.0M158.5 193.6V205.4M159.5 192.8V206.2M160.5 192.8V206.2M161.5 194.2V204.8M162.5 194.7V204.3M163.5 193.1V205.9M164.5 193.7V205.3M165.5 193.5V205.5M166.5 195.0V204.0M167.5 194.8V204.2M168.5 195.2V203.8M169.5 195.1V203.9M170.5 194.6V204.4M171.5 193.5V205.5M172.5 195.0V204.0M173.5 194.9V204.1M174.5 194.9V204.1M175.5 193.7V205.3M176.5 195.2V203.8M177.5 195.2V203.8M178.5 194.7V204.3M179.5 195.4V203.6M180.5 196.0V203.0M181.5 196.0V203.0M182.5 196.7V202.3M183.5 196.9V202.1M184.5 197.5V201.5M185.5 198.2V200.8M186.5 198.6V200.4M187.5 198.7V200.3M188.5 198.7V200.3M189.5 198.6V200.4M190.5 198.6V200.4M191.5 198.8V200.2M192.5 198.7V200.3M193.5 198.7V200.3M194.5 198.7V200.3M195.5 198.7V200.3M196.5 198.5V200.5M197.5 198.8V200.2M198.5 198.6V200.4M199.5 198.2V200.8M200.5 197.2V201.8M201.5 197.0V202.0M202.5 196.4V202.6M203.5 196.5V202.5M204.5 196.3V202.7M205.5 196.4V202.6M206.5 196.6V202.4M207.5 196.6V202.4M208.5 196.2V202.8M209.5 197.1V201.9M210.5 194.5V204.5M211.5 190.3V208.7M212.5 185.4V213.6M213.5 177.8V221.2M214.5 174.1V224.9M215.5 172.1V226.9M216.5 171.5V227.5M217.5 169.7V229.3M218.5 172.0V227.0M219.5 170.3V228.7M220.5 170.1V228.9M221.5 167.3V231.7M222.5 166.0V233.0M223.5 172.0V227.0M224.5 171.8V227.2M225.5 170.9V228.1M226.5 174.0V225.0M227.5 169.2V229.8M228.5 173.9V225.1M229.5 171.7V227.3M230.5 172.6V226.4M231.5 173.0V226.0M232.5 169.9V229.1M233.5 169.5V229.5M234.5 174.8V224.2M235.5 175.5V223.5M236.5 171.3V227.7M237.5 178.4V220.6M238.5 180.1V218.9M239.5 183.3V215.7M240.5 186.7V212.3M241.5 187.7V211.3M242.5 191.7V207.3M243.5 193.6V205.4M244.5 191.7V207.3M245.5 191.5V207.5M246.5 191.8V207.2M247.5 193.0V206.0M248.5 191.8V207.2M249.5 191.8V207.2M250.5 191.8V207.2M251.5 191.2V207.8M252.5 191.2V207.8M253.5 191.8V207.2M254.5 191.1V207.9M255.5 192.6V206.4M256.5 191.6V207.4M257.5 191.3V207.7M258.5 191.6V207.4M259.5 190.4V208.6M260.5 192.5V206.5M261.5 191.0V208.0M262.5 191.5V207.5M263.5 189.1V209.9M264.5 189.0V210.0M265.5 190.0V209.0M266.5 189.9V209.1M267.5 190.2V208.8M268.5 190.7V208.3M269.5 189.7V209.3M270.5 189.6V209.4M271.5 190.3V208.7M272.5 189.6V209.4M273.5 187.0V212.0M274.5 186.8V212.2M275.5 187.5V211.5M276.5 189.1V209.9M277.5 188.4V210.6M278.5 186.6V212.4M279.5 188.1V210.9M280.5 189.4V209.6M281.5 186.5V212.5M282.5 189.9V209.1M283.5 189.3V209.7M284.5 188.9V210.1M285.5 189.3V209.7M286.5 190.1V208.9M287.5 189.9V209.1M288.5 189.2V209.8M289.5 190.7V208.3M290.5 189.0V210.0M291.5 188.6V210.4M292.5 191.0V208.0M293.5 189.5V209.5M294.5 190.3V208.7M295.5 189.6V209.4M296.5 192.2V206.8M297.5 193.8V205.2M298.5 194.6V204.4M299.5 195.5V203.5M300.5 195.6V203.4M301.5 193.9V205.1M302.5 192.0V207.0M303.5 190.9V208.1M304.5 187.7V211.3M305.5 187.4V211.6M306.5 186.1V212.9M307.5 188.1V210.9M308.5 187.5V211.5M309.5 187.5V211.5M310.5 188.8V210.2M311.5 185.3V213.7M312.5 187.5V211.5M313.5 188.7V210.3M314.5 187.3V211.7M315.5 187.3V211.7M316.5 187.3V211.7M317.5 186.9V212.1M318.5 187.5V211.5M319.5 185.9V213.1M320.5 185.4V213.6M321.5 187.8V211.2M322.5 188.2V210.8M323.5 189.3V209.7M324.5 185.7V213.3M325.5 185.9V213.1M326.5 188.0V211.0M327.5 187.1V211.9M328.5 189.3V209.7M329.5 190.0V209.0M330.5 190.9V208.1M331.5 188.5V210.5M332.5 190.0V209.0M333.5 190.6V208.4M334.5 189.7V209.3M335.5 191.6V207.4M336.5 192.0V207.0M337.5 190.3V208.7M338.5 190.2V208.8M339.5 191.3V207.7M340.5 191.0V208.0M341.5 192.8V206.2M342.5 191.3V207.7M343.5 191.3V207.7M344.5 193.2V205.8M345.5 193.4V205.6M346.5 194.4V204.6M347.5 194.3V204.7M348.5 195.1V203.9M349.5 194.7V204.3M350.5 195.3V203.7M351.5 195.5V203.5M352.5 194.7V204.3M353.5 195.6V203.4M354.5 194.8V204.2M355.5 195.7V203.3M356.5 194.6V204.4M357.5 195.2V203.8M358.5 194.6V204.4M359.5 194.5V204.5M360.5 194.5V204.5M361.5 195.4V203.6M362.5 194.8V204.2M363.5 194.7V204.3M364.5 195.2V203.8M365.5 194.9V204.1M366.5 195.8V203.2M367.5 195.0V204.0M368.5 195.3V203.7M369.5 195.9V203.1M370.5 194.9V204.1M371.5 195.4V203.6M372.5 196.0V203.0M373.5 195.3V203.7M374.5 195.6V203.4M375.5 195.1V203.9M376.5 195.5V203.5M377.5 195.3V203.7M378.5 196.4V202.6M379.5 195.6V203.4M380.5 196.1V202.9M381.5 196.4V202.6M382.5 195.8V203.2M383.5 196.1V202.9M384.5 196.6V202.4M385.5 196.9V202.1M386.5 196.8V202.2M387.5 196.8V202.2M388.5 196.5V202.5M389.5 196.8V202.2M390.5 197.3V201.7M391.5 196.8V202.2M392.5 197.1V201.9M393.5 196.8V202.2M394.5 196.8V202.2M395.5 196.0V203.0M396.5 196.2V202.8M397.5 196.8V202.2M398.5 196.0V203.0M399.5 196.4V202.6M400.5 196.0V203.0M401.5 195.0V204.0M402.5 194.3V204.7M403.5 194.0V205.0M404.5 192.4V206.6M405.5 192.0V207.0M406.5 192.6V206.4M407.5 191.8V207.2M408.5 190.3V208.7M409.5 189.6V209.4M410.5 188.5V210.5M411.5 190.2V208.8M412.5 188.1V210.9M413.5 189.5V209.5M414.5 186.3V212.7M415.5 186.3V212.7M416.5 188.0V211.0M417.5 185.1V213.9M418.5 184.6V214.4M419.5 188.0V211.0M420.5 184.8V214.2M421.5 184.8V214.2M422.5 184.7V214.3M423.5 188.7V210.3M424.5 186.5V212.5M425.5 186.3V212.7M426.5 189.3V209.7M427.5 188.0V211.0M428.5 186.1V212.9M429.5 187.7V211.3M430.5 187.3V211.7M431.5 186.2V212.8M432.5 186.4V212.6M433.5 187.1V211.9M434.5 188.4V210.6M435.5 191.7V207.3M436.5 192.0V207.0M437.5 193.1V205.9M438.5 194.5V204.5M439.5 194.8V204.2M440.5 194.5V204.5M441.5 193.9V205.1M442.5 194.6V204.4M443.5 193.9V205.1M444.5 194.2V204.8M445.5 194.7V204.3M446.5 193.6V205.4M447.5 194.4V204.6M448.5 194.6V204.4M449.5 194.7V204.3M450.5 193.4V205.6M451.5 194.5V204.5M452.5 193.9V205.1M453.5 193.4V205.6M454.5 193.7V205.3M455.5 193.4V205.6M456.5 193.3V205.7M457.5 193.6V205.4M458.5 193.9V205.1M459.5 193.9V205.1M460.5 194.5V204.5M461.5 193.9V205.1M462.5 194.9V204.1M463.5 194.9V204.1M464.5 195.1V203.9M465.5 195.0V204.0M466.5 195.4V203.6M467.5 195.4V203.6M468.5 195.2V203.8M469.5 196.1V202.9M470.5 196.0V203.0M471.5 196.3V202.7M472.5 197.0V202.0M473.5 197.0V202.0M474.5 197.8V201.2M475.5 197.6V201.4M476.5 197.9V201.1M477.5 197.7V201.3M478.5 197.9V201.1M479.5 197.8V201.2M480.5 197.4V201.6M481.5 197.7V201.3M482.5 197.7V201.3M483.5 197.8V201.2M484.5 197.5V201.5M485.5 197.4V201.6M486.5 197.3V201.7M487.5 196.8V202.2M488.5 196.8V202.2M489.5 197.1V201.9M490.5 194.2V204.8M491.5 186.0V213.0M492.5 180.2V218.8M493.5 179.8V219.2M494.5 183.9V215.1M495.5 181.7V217.3M496.5 177.8V221.2M497.5 183.6V215.4M498.5 179.1V219.9M499.5 180.1V218.9M500.5 181.8V217.2M501.5 182.5V216.5M502.5 182.1V216.9M503.5 184.4V214.6M504.5 186.2V212.8M505.5 186.7V212.3M506.5 183.7V215.3M507.5 184.9V214.1M508.5 186.9V212.1M509.5 188.1V210.9M510.5 190.4V208.6M511.5 189.3V209.7M512.5 190.1V208.9M513.5 191.2V207.8M514.5 192.3V206.7M515.5 190.7V208.3M516.5 193.2V205.8M517.5 191.3V207.7M518.5 192.4V206.6M519.5 193.9V205.1M520.5 193.9V205.1M521.5 193.7V205.3M522.5 192.7V206.3M523.5 194.2V204.8M524.5 192.7V206.3M525.5 194.6V204.4M526.5 194.6V204.4M527.5 193.3V205.7M528.5 194.0V205.0M529.5 193.8V205.2M530.5 194.6V204.4M531.5 194.3V204.7M532.5 194.3V204.7M533.5 195.1V203.9M534.5 195.6V203.4M535.5 195.3V203.7M536.5 196.1V202.9M537.5 196.8V202.2M538.5 196.8V202.2M539.5 196.9V202.1M540.5 197.2V201.8M541.5 197.4V201.6M542.5 197.5V201.5M543.5 197.8V201.2M544.5 197.6V201.4M545.5 197.4V201.6M546.5 196.2V202.8M547.5 195.4V203.6M548.5 194.9V204.1M549.5 194.0V205.0M550.5 194.8V204.2M551.5 194.3V204.7M552.5 193.2V205.8M553.5 194.1V204.9M554.5 193.3V205.7M555.5 194.1V204.9M556.5 192.2V206.8M557.5 192.0V207.0M558.5 193.6V205.4M559.5 193.2V205.8M560.5 191.9V207.1M561.5 192.4V206.6M562.5 191.9V207.1M563.5 192.4V206.6M564.5 193.8V205.2M565.5 193.8V205.2M566.5 193.8V205.2M567.5 192.4V206.6M568.5 194.2V204.8M569.5 193.8V205.2M570.5 194.1V204.9M571.5 194.3V204.7M572.5 194.1V204.9M573.5 194.1V204.9M574.5 193.1V205.9M575.5 194.3V204.7M576.5 193.2V205.8M577.5 193.4V205.6M578.5 193.4V205.6M579.5 194.9V204.1M580.5 194.8V204.2M581.5 194.1V204.9M582.5 193.8V205.2M583.5 193.8V205.2M584.5 193.7V205.3M585.5 194.4V204.6M586.5 193.4V205.6M587.5 193.0V206.0M588.5 193.7V205.3M589.5 193.8V205.2M590.5 194.5V204.5M591.5 194.3V204.7M592.5 194.0V205.0M593.5 194.6V204.4M594.5 193.8V205.2M595.5 194.5V204.5M596.5 193.5V205.5M597.5 194.7V204.3M598.5 194.2V204.8M599.5 194.2V204.8M600.5 194.3V204.7M601.5 194.9V204.1M602.5 194.2V204.8M603.5 193.8V205.2M604.5 194.3V204.7M605.5 194.6V204.4M606.5 193.5V205.5M607.5 195.1V203.9M608.5 194.8V204.2M609.5 194.3V204.7M610.5 195.1V203.9M611.5 193.6V205.4M612.5 193.7V205.3M613.5 194.0V205.0M614.5 194.1V204.9M615.5 193.6V205.4M616.5 195.0V204.0M617.5 194.7V204.3M618.5 195.0V204.0M619.5 194.7V204.3M620.5 193.8V205.2M621.5 195.0V204.0M622.5 194.4V204.6M623.5 195.1V203.9M624.5 195.5V203.5M625.5 194.7V204.3M626.5 195.2V203.8M627.5 194.4V204.6M628.5 195.2V203.8M629.5 194.5V204.5M630.5 195.7V203.3M631.5 195.6V203.4M632.5 196.2V202.8M633.5 196.7V202.3M634.5 197.4V201.6M635.5 198.0V201.0M636.5 198.0V201.0M637.5 198.4V200.6M638.5 198.4V200.6M639.5 198.6V200.4M640.5 198.5V200.5M641.5 198.0V201.0M642.5 197.3V201.7M643.5 197.5V201.5M644.5 195.2V203.8M645.5 193.3V205.7M646.5 191.4V207.6M647.5 188.0V211.0M648.5 187.7V211.3M649.5 185.0V214.0M650.5 184.4V214.6M651.5 187.6V211.4M652.5 185.7V213.3M653.5 184.0V215.0M654.5 186.1V212.9M655.5 186.5V212.5M656.5 183.1V215.9M657.5 184.5V214.5M658.5 186.9V212.1M659.5 186.4V212.6M660.5 186.7V212.3M661.5 188.7V210.3M662.5 189.1V209.9M663.5 187.3V211.7M664.5 189.5V209.5M665.5 190.6V208.4M666.5 191.7V207.3M667.5 191.7V207.3M668.5 193.8V205.2M669.5 194.9V204.1M670.5 196.3V202.7M671.5 195.6V203.4M672.5 196.4V202.6M673.5 195.7V203.3M674.5 196.4V202.6M675.5 196.0V203.0M676.5 196.5V202.5M677.5 196.3V202.7M678.5 196.4V202.6M679.5 196.7V202.3M680.5 196.4V202.6M681.5 197.0V202.0M682.5 197.4V201.6M683.5 197.6V201.4M684.5 197.6V201.4M685.5 197.8V201.2M686.5 197.8V201.2M687.5 197.8V201.2M688.5 197.9V201.1M689.5 197.9V201.1M690.5 197.9V201.1M691.5 197.9V201.1M692.5 197.6V201.4M693.5 197.7V201.3M694.5 197.7V201.3M695.5 197.9V201.1M696.5 197.2V201.8M697.5 197.2V201.8M698.5 196.3V202.7M699.5 195.9V203.1M700.5 195.4V203.6M701.5 195.0V204.0M702.5 195.2V203.8M703.5 196.3V202.7M704.5 195.7V203.3M705.5 195.9V203.1M706.5 196.4V202.6M707.5 196.4V202.6M708.5 196.7V202.3M709.5 196.6V202.4M710.5 197.0V202.0M711.5 196.4V202.6M712.5 196.3V202.7M713.5 195.1V203.9M714.5 194.0V205.0M715.5 193.1V205.9M716.5 190.4V208.6M717.5 189.3V209.7M718.5 188.1V210.9M719.5 190.3V208.7M720.5 188.8V210.2M721.5 189.7V209.3M722.5 191.3V207.7M723.5 189.7V209.3M724.5 190.2V208.8M725.5 191.4V207.6M726.5 189.6V209.4M727.5 191.5V207.5M728.5 191.0V208.0M729.5 191.1V207.9M730.5 190.6V208.4M731.5 190.4V208.6M732.5 190.8V208.2M733.5 189.1V209.9M734.5 190.1V208.9M735.5 190.1V208.9M736.5 190.2V208.8M737.5 191.0V208.0M738.5 188.9V210.1M739.5 189.5V209.5M740.5 190.3V208.7M741.5 191.2V207.8M742.5 190.6V208.4M743.5 190.8V208.2M744.5 188.9V210.1M745.5 191.4V207.6M746.5 189.1V209.9M747.5 190.9V208.1M748.5 190.7V208.3M749.5 190.4V208.6M750.5 190.9V208.1M751.5 190.8V208.2M752.5 191.9V207.1M753.5 190.7V208.3M754.5 190.8V208.2M755.5 193.6V205.4M756.5 195.8V203.2M757.5 197.7V201.3M758.5 198.0V201.0M759.5 197.6V201.4M760.5 198.1V200.9M761.5 197.7V201.3M762.5 197.6V201.4M763.5 198.0V201.0M764.5 197.7V201.3M765.5 197.5V201.5M766.5 198.0V201.0M767.5 197.5V201.5M768.5 197.8V201.2M769.5 198.0V201.0M770.5 197.7V201.3M771.5 197.8V201.2M772.5 198.1V200.9M773.5 197.6V201.4M774.5 197.7V201.3M775.5 197.8V201.2M776.5 198.0V201.0M777.5 197.7V201.3M778.5 196.9V202.1M779.5 195.9V203.1M780.5 194.1V204.9M781.5 193.8V205.2M782.5 192.5V206.5M783.5 193.1V205.9M784.5 190.5V208.5M785.5 191.8V207.2M786.5 191.5V207.5M787.5 192.7V206.3M788.5 193.6V205.4M789.5 193.3V205.7M790.5 195.2V203.8M791.5 194.9V204.1M792.5 196.1V202.9M793.5 196.5V202.5M794.5 196.9V202.1M795.5 195.4V203.6M796.5 191.6V207.4M797.5 191.5V207.5M798.5 191.5V207.5M799.5 191.7V207.3M800.5 191.7V207.3M801.5 192.1V206.9M802.5 191.8V207.2M803.5 189.7V209.3M804.5 190.5V208.5M805.5 192.2V206.8M806.5 191.4V207.6M807.5 191.1V207.9M808.5 189.8V209.2M809.5 191.6V207.4M810.5 190.5V208.5M811.5 191.2V207.8M812.5 191.1V207.9M813.5 190.8V208.2M814.5 190.7V208.3M815.5 190.4V208.6M816.5 191.2V207.8M817.5 192.3V206.7M818.5 192.6V206.4M819.5 192.5V206.5M820.5 191.2V207.8M821.5 192.5V206.5M822.5 191.2V207.8M823.5 192.9V206.1M824.5 192.3V206.7M825.5 191.1V207.9M826.5 192.7V206.3M827.5 191.6V207.4M828.5 192.9V206.1M829.5 191.4V207.6M830.5 192.9V206.1M831.5 193.2V205.8M832.5 192.3V206.7M833.5 191.9V207.1M834.5 193.0V206.0M835.5 193.7V205.3M836.5 193.4V205.6M837.5 191.7V207.3M838.5 193.7V205.3M839.5 193.7V205.3M840.5 193.5V205.5M841.5 191.8V207.2M842.5 192.8V206.2M843.5 192.1V206.9M844.5 192.6V206.4M845.5 191.8V207.2M846.5 193.1V205.9M847.5 192.9V206.1M848.5 192.2V206.8M849.5 192.2V206.8M850.5 193.1V205.9M851.5 193.0V206.0M852.5 193.9V205.1M853.5 192.7V206.3M854.5 193.8V205.2M855.5 192.7V206.3M856.5 193.6V205.4M857.5 193.2V205.8M858.5 193.1V205.9M859.5 193.6V205.4M860.5 193.8V205.2M861.5 193.3V205.7M862.5 193.0V206.0M863.5 194.2V204.8M864.5 192.9V206.1M865.5 193.7V205.3M866.5 192.8V206.2M867.5 192.9V206.1M868.5 194.3V204.7M869.5 193.6V205.4M870.5 193.1V205.9M871.5 193.0V206.0M872.5 193.4V205.6M873.5 193.7V205.3M874.5 194.3V204.7M875.5 194.1V204.9M876.5 194.0V205.0M877.5 194.5V204.5M878.5 195.4V203.6M879.5 195.7V203.3M880.5 195.7V203.3M881.5 196.8V202.2M882.5 196.5V202.5M883.5 196.0V203.0M884.5 196.1V202.9M885.5 195.7V203.3M886.5 194.9V204.1M887.5 195.9V203.1M888.5 195.2V203.8M889.5 195.9V203.1M890.5 195.9V203.1M891.5 196.2V202.8M892.5 196.3V202.7M893.5 196.8V202.2M894.5 197.0V202.0M895.5 196.7V202.3M896.5 196.2V202.8M897.5 194.5V204.5M898.5 194.7V204.3M899.5 194.3V204.7M900.5 193.3V205.7M901.5 193.7V205.3M902.5 193.9V205.1M903.5 192.5V206.5M904.5 192.9V206.1M905.5 193.6V205.4M906.5 191.7V207.3M907.5 192.2V206.8M908.5 191.9V207.1M909.5 193.5V205.5M910.5 192.8V206.2M911.5 192.2V206.8M912.5 193.6V205.4M913.5 193.0V206.0M914.5 193.0V206.0M915.5 192.9V206.1M916.5 193.2V205.8M917.5 192.9V206.1M918.5 191.9V207.1M919.5 191.6V207.4M920.5 192.1V206.9M921.5 192.7V206.3M922.5 193.6V205.4M923.5 193.4V205.6M924.5 193.2V205.8M925.5 193.4V205.6M926.5 192.4V206.6M927.5 193.9V205.1M928.5 193.2V205.8M929.5 192.9V206.1M930.5 193.5V205.5M931.5 193.0V206.0M932.5 193.4V205.6M933.5 194.2V204.8M934.5 193.5V205.5M935.5 194.1V204.9M936.5 195.1V203.9M937.5 194.7V204.3M938.5 195.5V203.5M939.5 196.6V202.4M940.5 196.8V202.2M941.5 196.8V202.2M942.5 195.7V203.3M943.5 195.6V203.4M944.5 194.9V204.1M945.5 194.9V204.1M946.5 196.2V202.8M947.5 196.5V202.5M948.5 197.1V201.9M949.5 196.6V202.4M950.5 196.5V202.5M951.5 196.6V202.4M952.5 196.7V202.3M953.5 196.3V202.7M954.5 196.1V202.9M955.5 196.3V202.7M956.5 195.9V203.1M957.5 195.8V203.2M958.5 196.4V202.6M959.5 196.4V202.6M960.5 195.9V203.1M961.5 195.9V203.1M962.5 196.0V203.0M963.5 196.0V203.0M964.5 196.7V202.3M965.5 196.5V202.5M966.5 196.3V202.7M967.5 196.3V202.7M968.5 196.9V202.1M969.5 196.9V202.1M970.5 196.9V202.1M971.5 196.7V202.3M972.5 196.5V202.5M973.5 197.1V201.9M974.5 197.0V202.0M975.5 196.9V202.1M976.5 196.9V202.1M977.5 196.7V202.3M978.5 197.2V201.8M979.5 197.2V201.8M980.5 197.0V202.0M981.5 197.1V201.9M982.5 197.5V201.5M983.5 197.6V201.4M984.5 197.5V201.5M985.5 197.4V201.6M986.5 197.3V201.7M987.5 197.7V201.3M988.5 197.9V201.1M989.5 197.8V201.2M990.5 198.0V201.0M991.5 198.1V200.9M992.5 197.8V201.2M993.5 198.2V200.8M994.5 198.3V200.7M995.5 198.3V200.7M996.5 198.2V200.8M997.5 198.5V200.5M998.5 198.5V200.5M999.5 198.5V200.5M1000.5 198.7V200.3M1001.5 198.7V200.3M1002.5 198.7V200.3M1003.5 198.6V200.4M1004.5 198.7V200.3M1005.5 198.6V200.4M1006.5 198.6V200.4M1007.5 198.7V200.3M1008.5 198.6V200.4M1009.5 198.7V200.3M1010.5 198.5V200.5M1011.5 198.6V200.4" stroke="#6464dc" stroke-width="1"/></svg>
<div class="a" style="left:1904px;top:122px;width:12px;height:821px;background:#d4d0c8;border-left:1px solid #fff"></div>
<div class="a" style="left:1904px;top:123px;width:16px;height:15px;border:1px solid;border-color:#d4d0c8 #404040 #404040 #d4d0c8;box-shadow:inset 1px 1px #fff,inset -1px -1px #808080;background:#d4d0c8"></div>
<svg class="a" style="left:1908px;top:128px" width="7" height="4"><path d="M3.5 0L7 4H0Z" fill="#000"/></svg>
<div class="a" style="left:1904px;top:138px;width:16px;height:788px;border:1px solid;border-color:#d4d0c8 #404040 #404040 #d4d0c8;box-shadow:inset 1px 1px #fff,inset -1px -1px #808080;background:#d4d0c8"></div>
<div class="a" style="left:1904px;top:926px;width:16px;height:16px;border:1px solid;border-color:#d4d0c8 #404040 #404040 #d4d0c8;box-shadow:inset 1px 1px #fff,inset -1px -1px #808080;background:#d4d0c8"></div>
<svg class="a" style="left:1908px;top:932px" width="7" height="4"><path d="M0 0H7L3.5 4Z" fill="#000"/></svg>
<div class="a" style="left:0;top:943px;width:1916px;height:16px;background:#d4d0c8"></div>
<div class="a" style="left:136px;top:943px;width:16px;height:16px;border:1px solid;border-color:#d4d0c8 #404040 #404040 #d4d0c8;box-shadow:inset 1px 1px #fff,inset -1px -1px #808080"></div>
<svg class="a" style="left:141px;top:947px" width="4" height="7"><path d="M4 0V7L0 3.5Z" fill="#000"/></svg>
<div class="a" style="left:152px;top:943px;width:1736px;height:16px;border:1px solid;border-color:#d4d0c8 #404040 #404040 #d4d0c8;box-shadow:inset 1px 1px #fff,inset -1px -1px #808080"></div>
<div class="a" style="left:1888px;top:943px;width:16px;height:16px;border:1px solid;border-color:#d4d0c8 #404040 #404040 #d4d0c8;box-shadow:inset 1px 1px #fff,inset -1px -1px #808080"></div>
<svg class="a" style="left:1894px;top:947px" width="4" height="7"><path d="M0 0V7L4 3.5Z" fill="#000"/></svg>
<div class="a" style="left:0;top:959px;width:1916px;height:1px;background:#808080"></div>
<div class="a" style="left:1px;top:961px;width:10px;height:54px;border-left:1px solid #fff;border-top:1px solid #fff;border-right:1px solid #a0a0a0"></div>
<div class="a" style="left:4px;top:966px;width:5px;height:2px;border-top:1px solid #fff;border-bottom:1px solid #808080"></div>
<div class="a" style="left:4px;top:970px;width:5px;height:2px;border-top:1px solid #fff;border-bottom:1px solid #808080"></div>
<div class="a" style="left:4px;top:974px;width:5px;height:2px;border-top:1px solid #fff;border-bottom:1px solid #808080"></div>
<div class="a" style="left:4px;top:978px;width:5px;height:2px;border-top:1px solid #fff;border-bottom:1px solid #808080"></div>
<div class="a" style="left:4px;top:982px;width:5px;height:2px;border-top:1px solid #fff;border-bottom:1px solid #808080"></div>
<div class="a" style="left:4px;top:986px;width:5px;height:2px;border-top:1px solid #fff;border-bottom:1px solid #808080"></div>
<div class="a" style="left:4px;top:990px;width:5px;height:2px;border-top:1px solid #fff;border-bottom:1px solid #808080"></div>
<div class="a" style="left:4px;top:994px;width:5px;height:2px;border-top:1px solid #fff;border-bottom:1px solid #808080"></div>
<div class="a" style="left:4px;top:998px;width:5px;height:2px;border-top:1px solid #fff;border-bottom:1px solid #808080"></div>
<div class="a" style="left:4px;top:1002px;width:5px;height:2px;border-top:1px solid #fff;border-bottom:1px solid #808080"></div>
<div class="a" style="left:4px;top:1006px;width:5px;height:2px;border-top:1px solid #fff;border-bottom:1px solid #808080"></div>
<div class="a" style="left:0;top:1015px;width:1916px;height:1px;background:#808080"></div>
<div class="t" style="left:13px;top:969px;font-size:12px">Projekt-Frequenz (Hz):</div>
<div class="sunk" style="left:13px;top:984px;width:78px;height:21px;background:#fff"></div>
<div class="t" style="left:19px;top:989px;font-size:12px">44100</div>
<div class="btn" style="left:75px;top:986px;width:15px;height:17px"></div>
<svg class="a" style="left:79px;top:993px" width="7" height="4"><path d="M0 0H7L3.5 4Z" fill="#000"/></svg>
<div class="t" style="left:156px;top:969px;font-size:12px">Anfang der Auswahl:</div>
<div class="t" style="left:434px;top:969px;font-size:12px">Audioposition:</div>
<div class="a" style="left:296px;top:968px;width:12px;height:12px;border-radius:50%;background:#fff;border:1px solid;border-color:#808080 #fff #fff #808080;box-shadow:inset 1px 1px #404040"></div><div class="a" style="left:300px;top:972px;width:4px;height:4px;border-radius:50%;background:#000"></div>
<div class="t" style="left:313px;top:969px;font-size:12px">Ende</div>
<div class="a" style="left:350px;top:968px;width:12px;height:12px;border-radius:50%;background:#fff;border:1px solid;border-color:#808080 #fff #fff #808080;box-shadow:inset 1px 1px #404040"></div>
<div class="t" style="left:367px;top:969px;font-size:12px">Länge</div>
<div class="sunk" style="left:156px;top:984px;width:116px;height:22px;background:#c8c8c8"></div>
<div class="t" style="left:160.5px;top:989px;font-size:12px;color:#1818b0">0</div>
<div class="t" style="left:170.5px;top:989px;font-size:12px;color:#1818b0">0</div>
<div class="t" style="left:183px;top:989px;font-size:12px;color:#000">h</div>
<div class="t" style="left:195px;top:989px;font-size:12px;color:#1818b0">0</div>
<div class="t" style="left:205px;top:989px;font-size:12px;color:#1818b0">0</div>
<div class="t" style="left:218px;top:989px;font-size:12px;color:#000">m</div>
<div class="t" style="left:233px;top:989px;font-size:12px;color:#1818b0">0</div>
<div class="t" style="left:243px;top:989px;font-size:12px;color:#1818b0">0</div>
<div class="t" style="left:256px;top:989px;font-size:12px;color:#000">s</div>
<div class="a" style="left:262px;top:986px;width:9px;height:18px;border:1px solid;border-color:#fff #404040 #404040 #fff;background:#d4d0c8"></div>
<svg class="a" style="left:263px;top:991px" width="7" height="5"><path d="M0 0H7L3.5 5Z" fill="#000"/></svg>
<div class="sunk" style="left:295px;top:984px;width:116px;height:22px;background:#c8c8c8"></div>
<div class="t" style="left:299.5px;top:989px;font-size:12px;color:#1818b0">0</div>
<div class="t" style="left:309.5px;top:989px;font-size:12px;color:#1818b0">0</div>
<div class="t" style="left:322px;top:989px;font-size:12px;color:#000">h</div>
<div class="t" style="left:334px;top:989px;font-size:12px;color:#1818b0">0</div>
<div class="t" style="left:344px;top:989px;font-size:12px;color:#1818b0">0</div>
<div class="t" style="left:357px;top:989px;font-size:12px;color:#000">m</div>
<div class="t" style="left:372px;top:989px;font-size:12px;color:#1818b0">0</div>
<div class="t" style="left:382px;top:989px;font-size:12px;color:#1818b0">0</div>
<div class="t" style="left:395px;top:989px;font-size:12px;color:#000">s</div>
<div class="a" style="left:401px;top:986px;width:9px;height:18px;border:1px solid;border-color:#fff #404040 #404040 #fff;background:#d4d0c8"></div>
<svg class="a" style="left:402px;top:991px" width="7" height="5"><path d="M0 0H7L3.5 5Z" fill="#000"/></svg>
<div class="sunk" style="left:434px;top:984px;width:116px;height:22px;background:#c8c8c8"></div>
<div class="t" style="left:438.5px;top:989px;font-size:12px;color:#1818b0">0</div>
<div class="t" style="left:448.5px;top:989px;font-size:12px;color:#1818b0">0</div>
<div class="t" style="left:461px;top:989px;font-size:12px;color:#000">h</div>
<div class="t" style="left:473px;top:989px;font-size:12px;color:#1818b0">0</div>
<div class="t" style="left:483px;top:989px;font-size:12px;color:#1818b0">0</div>
<div class="t" style="left:496px;top:989px;font-size:12px;color:#000">m</div>
<div class="t" style="left:511px;top:989px;font-size:12px;color:#1818b0">0</div>
<div class="t" style="left:521px;top:989px;font-size:12px;color:#1818b0">0</div>
<div class="t" style="left:534px;top:989px;font-size:12px;color:#000">s</div>
<div class="a" style="left:540px;top:986px;width:9px;height:18px;border:1px solid;border-color:#fff #404040 #404040 #fff;background:#d4d0c8"></div>
<svg class="a" style="left:541px;top:991px" width="7" height="5"><path d="M0 0H7L3.5 5Z" fill="#000"/></svg>
<div class="a" style="left:0;top:1018px;width:1771px;height:18px;border-top:1px solid #808080;border-left:1px solid #808080"></div>
<div class="a" style="left:1772px;top:1018px;width:144px;height:18px;border-top:1px solid #808080;border-left:1px solid #808080"></div>
<div class="a" style="left:122px;top:323px;width:1030px;height:475px;background:#d4d0c8;border:1px solid;border-color:#d4d0c8 #404040 #404040 #d4d0c8;box-shadow:inset 1px 1px #fff,inset -1px -1px #808080"></div>
<div class="a" style="left:125px;top:326px;width:1024px;height:18px;background:linear-gradient(to right,#0a246a,#a6caf0)"></div>
<svg class="a" style="left:127px;top:328px" width="15" height="13"><rect x="0.5" y="0.5" width="13" height="12" fill="#fff" stroke="#c0c0c0"/><rect x="1.5" y="2" width="7" height="9" fill="#3a8a6a"/><rect x="9" y="9" width="3" height="2" fill="#909090"/><rect x="11" y="2" width="1" height="4" fill="#000"/></svg>
<div class="t" style="left:145px;top:330px;font-weight:bold;font-size:11.8px;color:#fff">Draw Sample</div>
<div class="btn" style="left:1131px;top:328px;width:16px;height:14px"></div>
<svg class="a" style="left:1134px;top:330px" width="10" height="9"><path d="M1 1L9 8M9 1L1 8" stroke="#000" stroke-width="1.6"/></svg>
<div class="btn" style="left:135px;top:355px;width:30px;height:20px"></div>
<div class="t" style="left:145px;top:361px;font-size:11px">...</div>
<div class="t" id="path" style="left:175px;top:356px;font-size:12px;color:#000;transform:scaleX(0.9085);transform-origin:0 0">E:\Coding\Projekte\PureBasic 4.3\3D Adventure Engine\Projects\TestProject\Sound\AchKommSchonIrgentwasMussEsDoch.ogg - 16 bits, 1 channels, 44100 Hz</div>
<div class="a" style="left:135px;top:375px;width:1004px;height:400px;background:#fff"></div>
<svg class="a" style="left:0;top:0" width="1916" height="800" shape-rendering="crispEdges"><path d="M135 575.5H1139" stroke="#000" stroke-width="1"/><path d="M135.5 571V580M136.5 569V582M137.5 568V583M138.5 565V586M139.5 571V580M140.5 568V583M141.5 570V581M142.5 564V587M143.5 571V580M144.5 568V583M145.5 570V581M146.5 564V587M147.5 573V578M148.5 566V585M149.5 568V583M150.5 566V585M151.5 566V585M152.5 567V584M153.5 570V581M154.5 567V584M155.5 570V581M156.5 569V582M157.5 571V580M158.5 574V577M161.5 574V577M162.5 571V580M163.5 571V580M164.5 571V580M165.5 573V578M166.5 570V581M167.5 569V582M168.5 569V582M169.5 574V577M170.5 570V581M171.5 574V577M172.5 571V580M173.5 571V580M174.5 569V582M175.5 573V578M176.5 570V581M177.5 574V577M178.5 570V581M179.5 572V579M180.5 572V579M181.5 572V579M182.5 573V578M184.5 574V577M188.5 574V577M191.5 574V577M193.5 574V577M198.5 574V577M199.5 574V577M200.5 574V577M201.5 574V577M202.5 573V578M203.5 574V577M204.5 571V580M205.5 571V580M206.5 572V579M207.5 573V578M208.5 570V581M209.5 573V578M210.5 571V580M211.5 572V579M212.5 570V581M213.5 573V578M214.5 571V580M215.5 565V586M216.5 542V609M217.5 539V612M218.5 532V619M219.5 530V621M220.5 539V612M221.5 530V621M222.5 532V619M223.5 529V622M224.5 524V627M225.5 536V615M226.5 521V630M227.5 537V614M228.5 523V628M229.5 532V619M230.5 522V629M231.5 520V631M232.5 530V621M233.5 530V621M234.5 524V627M235.5 523V628M236.5 514V637M237.5 511V640M238.5 517V634M239.5 524V627M240.5 521V630M241.5 516V635M242.5 526V625M243.5 510V641M244.5 522V629M245.5 519V632M246.5 511V640M247.5 512V639M248.5 511V640M249.5 522V629M250.5 532V619M251.5 546V605M252.5 564V587M253.5 568V583M254.5 567V584M255.5 567V584M256.5 565V586M257.5 569V582M258.5 564V587M259.5 565V586M260.5 564V587M261.5 573V578M262.5 564V587M263.5 568V583M264.5 567V584M265.5 569V582M266.5 567V584M267.5 566V585M268.5 571V580M269.5 573V578M270.5 568V583M271.5 566V585M272.5 566V585M273.5 568V583M274.5 572V579M275.5 572V579M276.5 568V583M277.5 567V584M278.5 562V589M279.5 566V585M280.5 570V581M281.5 564V587M282.5 562V589M283.5 570V581M284.5 566V585M285.5 567V584M286.5 565V586M287.5 572V579M288.5 565V586M289.5 566V585M290.5 561V590M291.5 564V587M292.5 562V589M293.5 565V586M294.5 567V584M295.5 570V581M296.5 566V585M297.5 569V582M298.5 564V587M299.5 571V580M300.5 562V589M301.5 563V588M302.5 566V585M303.5 565V586M304.5 564V587M305.5 570V581M306.5 566V585M307.5 570V581M308.5 563V588M309.5 566V585M310.5 564V587M311.5 573V578M312.5 572V579M313.5 574V577M314.5 572V579M315.5 564V587M316.5 560V591M317.5 560V591M318.5 561V590M319.5 560V591M320.5 557V594M321.5 555V596M322.5 560V591M323.5 553V598M324.5 555V596M325.5 556V595M326.5 555V596M327.5 556V595M328.5 553V598M329.5 555V596M330.5 557V594M331.5 556V595M332.5 548V603M333.5 556V595M334.5 550V601M335.5 551V600M336.5 551V600M337.5 554V597M338.5 551V600M339.5 554V597M340.5 556V595M341.5 566V585M342.5 553V598M343.5 554V597M344.5 557V594M345.5 559V592M346.5 559V592M347.5 555V596M348.5 551V600M349.5 555V596M350.5 558V593M351.5 565V586M352.5 559V592M353.5 570V581M354.5 560V591M355.5 564V587M356.5 559V592M357.5 571V580M358.5 563V588M359.5 571V580M360.5 563V588M361.5 568V583M362.5 567V584M363.5 571V580M364.5 566V585M365.5 571V580M366.5 568V583M367.5 570V581M368.5 566V585M369.5 572V579M370.5 567V584M371.5 570V581M372.5 567V584M373.5 569V582M374.5 568V583M375.5 571V580M376.5 567V584M377.5 570V581M378.5 568V583M379.5 572V579M380.5 567V584M381.5 569V582M382.5 567V584M383.5 570V581M384.5 569V582M385.5 573V578M386.5 567V584M387.5 570V581M388.5 567V584M389.5 570V581M390.5 567V584M391.5 572V579M392.5 569V582M393.5 568V583M394.5 569V582M395.5 572V579M396.5 568V583M397.5 572V579M398.5 569V582M399.5 572V579M400.5 568V583M401.5 569V582M402.5 570V581M403.5 574V577M404.5 569V582M405.5 570V581M406.5 571V580M407.5 570V581M408.5 569V582M409.5 570V581M410.5 569V582M411.5 571V580M412.5 571V580M413.5 572V579M424.5 573V578M425.5 573V578M426.5 571V580M427.5 573V578M428.5 571V580M429.5 571V580M430.5 570V581M431.5 571V580M432.5 572V579M433.5 573V578M434.5 568V583M435.5 568V583M436.5 559V592M437.5 562V589M438.5 558V593M439.5 562V589M440.5 562V589M441.5 561V590M442.5 571V580M443.5 562V589M444.5 557V594M445.5 569V582M446.5 563V588M447.5 568V583M448.5 557V594M449.5 565V586M450.5 563V588M451.5 562V589M452.5 557V594M453.5 562V589M454.5 562V589M455.5 567V584M456.5 559V592M457.5 570V581M458.5 559V592M459.5 568V583M460.5 556V595M461.5 564V587M462.5 561V590M463.5 559V592M464.5 561V590M465.5 560V591M466.5 560V591M467.5 561V590M468.5 560V591M469.5 571V580M470.5 560V591M471.5 565V586M472.5 562V589M473.5 562V589M474.5 566V585M475.5 569V582M476.5 569V582M477.5 572V579M478.5 567V584M479.5 570V581M480.5 568V583M481.5 570V581M482.5 565V586M483.5 569V582M484.5 568V583M485.5 568V583M486.5 566V585M487.5 570V581M488.5 569V582M489.5 572V579M490.5 567V584M491.5 572V579M492.5 565V586M493.5 572V579M494.5 566V585M495.5 563V588M496.5 563V588M497.5 571V580M498.5 564V587M499.5 564V587M500.5 568V583M501.5 567V584M502.5 566V585M503.5 569V582M504.5 570V581M505.5 574V577M506.5 572V579M507.5 573V578M508.5 572V579M509.5 571V580M510.5 571V580M511.5 574V577M512.5 572V579M513.5 573V578M514.5 572V579M515.5 572V579M516.5 571V580M517.5 574V577M518.5 574V577M520.5 574V577M521.5 574V577M522.5 574V577M523.5 574V577M524.5 574V577M526.5 574V577M527.5 574V577M528.5 574V577M530.5 574V577M531.5 574V577M532.5 574V577M534.5 574V577M535.5 568V583M536.5 558V593M537.5 568V583M538.5 560V591M539.5 564V587M540.5 559V592M541.5 557V594M542.5 560V591M543.5 565V586M544.5 555V596M545.5 558V593M546.5 552V599M547.5 569V582M548.5 558V593M549.5 562V589M550.5 552V599M551.5 561V590M552.5 561V590M553.5 561V590M554.5 560V591M555.5 558V593M556.5 563V588M557.5 570V581M558.5 566V585M559.5 570V581M560.5 572V579M561.5 572V579M562.5 572V579M563.5 573V578M564.5 572V579M565.5 572V579M566.5 571V580M567.5 571V580M568.5 572V579M569.5 574V577M570.5 571V580M571.5 572V579M572.5 571V580M573.5 573V578M574.5 572V579M575.5 571V580M576.5 572V579M577.5 574V577M578.5 571V580M579.5 573V578M580.5 571V580M581.5 573V578M582.5 571V580M583.5 572V579M584.5 572V579M585.5 573V578M586.5 571V580M587.5 572V579M588.5 572V579M589.5 572V579M590.5 571V580M591.5 573V578M592.5 571V580M593.5 571V580M594.5 572V579M595.5 572V579M596.5 571V580M597.5 571V580M598.5 570V581M599.5 572V579M600.5 569V582M601.5 570V581M602.5 569V582M603.5 570V581M604.5 570V581M605.5 570V581M606.5 570V581M607.5 574V577M608.5 568V583M609.5 571V580M610.5 568V583M611.5 569V582M612.5 569V582M613.5 569V582M614.5 570V581M615.5 570V581M616.5 569V582M617.5 570V581M618.5 568V583M619.5 571V580M620.5 558V593M621.5 566V585M622.5 560V591M623.5 560V591M624.5 562V589M625.5 560V591M626.5 560V591M627.5 564V587M628.5 560V591M629.5 562V589M630.5 559V592M631.5 571V580M632.5 563V588M633.5 561V590M634.5 562V589M635.5 560V591M636.5 559V592M637.5 568V583M638.5 562V589M639.5 569V582M640.5 562V589M641.5 559V592M642.5 559V592M643.5 562V589M644.5 558V593M645.5 568V583M646.5 569V582M647.5 574V577M648.5 569V582M649.5 570V581M650.5 569V582M651.5 571V580M652.5 570V581M653.5 570V581M654.5 568V583M655.5 570V581M656.5 568V583M657.5 569V582M658.5 568V583M659.5 572V579M660.5 569V582M661.5 573V578M662.5 572V579M663.5 574V577M664.5 571V580M665.5 573V578M666.5 571V580M667.5 574V577M668.5 571V580M669.5 571V580M670.5 571V580M671.5 573V578M672.5 571V580M673.5 572V579M674.5 571V580M675.5 573V578M676.5 572V579M677.5 572V579M678.5 572V579M679.5 572V579M680.5 571V580M681.5 571V580M682.5 571V580M683.5 574V577M684.5 572V579M685.5 572V579M686.5 572V579M687.5 573V578M688.5 572V579M689.5 572V579M690.5 572V579M691.5 573V578M692.5 572V579M693.5 574V577M694.5 571V580M695.5 574V577M696.5 572V579M697.5 571V580M698.5 572V579M699.5 571V580M700.5 571V580M701.5 572V579M702.5 572V579M703.5 573V578M704.5 574V577M716.5 571V580M717.5 566V585M718.5 564V587M719.5 571V580M720.5 563V588M721.5 563V588M722.5 563V588M723.5 570V581M724.5 562V589M725.5 565V586M726.5 566V585M727.5 571V580M728.5 566V585M729.5 570V581M730.5 564V587M731.5 566V585M732.5 563V588M733.5 565V586M734.5 566V585M735.5 569V582M736.5 564V587M737.5 572V579M738.5 567V584M739.5 565V586M740.5 567V584M741.5 570V581M742.5 565V586M743.5 563V588M744.5 563V588M745.5 566V585M746.5 566V585M747.5 572V579M748.5 566V585M749.5 570V581M750.5 567V584M751.5 571V580M752.5 572V579M753.5 574V577M754.5 574V577M756.5 574V577M758.5 574V577M760.5 574V577M761.5 574V577M762.5 574V577M763.5 574V577M764.5 574V577M765.5 574V577M766.5 574V577M768.5 574V577M769.5 574V577M770.5 574V577M771.5 574V577M772.5 574V577M773.5 574V577M774.5 574V577M776.5 574V577M777.5 574V577M778.5 573V578M779.5 571V580M780.5 570V581M781.5 573V578M782.5 569V582M783.5 571V580M784.5 569V582M785.5 572V579M786.5 569V582M787.5 573V578M788.5 570V581M789.5 570V581M790.5 564V587M791.5 571V580M792.5 566V585M793.5 565V586M794.5 562V589M795.5 566V585M796.5 562V589M797.5 567V584M798.5 566V585M799.5 565V586M800.5 564V587M801.5 571V580M802.5 562V589M803.5 563V588M804.5 563V588M805.5 562V589M806.5 567V584M807.5 568V583M808.5 572V579M809.5 567V584M810.5 563V588M811.5 572V579M812.5 566V585M813.5 571V580M814.5 565V586M815.5 566V585M816.5 567V584M817.5 566V585M818.5 563V588M819.5 573V578M820.5 567V584M821.5 565V586M822.5 563V588M823.5 567V584M824.5 566V585M825.5 566V585M826.5 564V587M827.5 567V584M828.5 564V587M829.5 569V582M830.5 566V585M831.5 573V578M832.5 566V585M833.5 565V586M834.5 566V585M835.5 571V580M836.5 564V587M837.5 565V586M838.5 565V586M839.5 572V579M840.5 565V586M841.5 572V579M842.5 567V584M843.5 571V580M844.5 567V584M845.5 570V581M846.5 565V586M847.5 570V581M848.5 570V581M849.5 574V577M850.5 574V577M851.5 574V577M852.5 573V578M853.5 573V578M854.5 573V578M856.5 573V578M857.5 574V577M858.5 574V577M859.5 574V577M860.5 573V578M861.5 573V578M862.5 573V578M863.5 574V577M864.5 573V578M865.5 574V577M866.5 574V577M868.5 573V578M869.5 574V577M870.5 566V585M871.5 568V583M872.5 565V586M873.5 570V581M874.5 566V585M875.5 571V580M876.5 569V582M877.5 569V582M878.5 570V581M879.5 571V580M880.5 569V582M881.5 570V581M882.5 571V580M883.5 571V580M884.5 570V581M885.5 571V580M886.5 571V580M887.5 573V578M888.5 570V581M889.5 572V579M890.5 570V581M891.5 573V578M892.5 570V581M893.5 572V579M894.5 570V581M895.5 572V579M896.5 570V581M897.5 572V579M898.5 569V582M899.5 572V579M900.5 569V582M901.5 572V579M902.5 569V582M903.5 573V578M904.5 570V581M905.5 574V577M906.5 570V581M907.5 572V579M908.5 570V581M909.5 570V581M910.5 570V581M911.5 571V580M912.5 570V581M913.5 570V581M914.5 570V581M915.5 571V580M916.5 570V581M917.5 573V578M918.5 568V583M919.5 571V580M920.5 570V581M921.5 574V577M922.5 568V583M923.5 569V582M924.5 568V583M925.5 569V582M926.5 569V582M927.5 572V579M928.5 569V582M929.5 570V581M930.5 571V580M931.5 570V581M932.5 572V579M933.5 570V581M934.5 569V582M935.5 569V582M936.5 570V581M937.5 573V578M938.5 570V581M939.5 571V580M940.5 568V583M941.5 572V579M942.5 567V584M943.5 569V582M944.5 565V586M945.5 568V583M946.5 565V586M947.5 567V584M948.5 565V586M949.5 568V583M950.5 570V581M951.5 567V584M952.5 564V587M953.5 566V585M954.5 564V587M955.5 568V583M956.5 568V583M957.5 569V582M958.5 564V587M959.5 569V582M960.5 568V583M961.5 573V578M962.5 564V587M963.5 570V581M964.5 565V586M965.5 572V579M966.5 567V584M967.5 570V581M968.5 564V587M969.5 570V581M970.5 564V587M971.5 566V585M972.5 564V587M973.5 565V586M974.5 565V586M975.5 567V584M976.5 567V584M977.5 565V586M978.5 565V586M979.5 567V584M980.5 566V585M981.5 573V578M982.5 565V586M983.5 571V580M984.5 567V584M985.5 567V584M986.5 566V585M987.5 568V583M988.5 568V583M989.5 572V579M990.5 568V583M991.5 570V581M992.5 567V584M993.5 570V581M994.5 568V583M995.5 566V585M996.5 566V585M997.5 567V584M998.5 566V585M999.5 572V579M1000.5 567V584M1001.5 570V581M1002.5 563V588M1003.5 562V589M1004.5 563V588M1005.5 569V582M1006.5 563V588M1007.5 571V580M1008.5 561V590M1009.5 571V580M1010.5 560V591M1011.5 567V584M1012.5 558V593M1013.5 560V591M1014.5 563V588M1015.5 569V582M1016.5 562V589M1017.5 569V582M1018.5 558V593M1019.5 565V586M1020.5 561V590M1021.5 566V585M1022.5 564V587M1023.5 567V584M1024.5 561V590M1025.5 567V584M1026.5 558V593M1027.5 564V587M1028.5 564V587M1029.5 571V580M1030.5 560V591M1031.5 562V589M1032.5 563V588M1033.5 568V583M1034.5 562V589M1035.5 568V583M1036.5 567V584M1037.5 566V585M1038.5 567V584M1039.5 570V581M1040.5 569V582M1041.5 572V579M1042.5 566V585M1043.5 570V581M1044.5 563V588M1045.5 565V586M1046.5 563V588M1047.5 571V580M1048.5 560V591M1049.5 564V587M1050.5 559V592M1051.5 568V583M1052.5 562V589M1053.5 567V584M1054.5 564V587M1055.5 571V580M1056.5 568V583M1057.5 568V583M1058.5 571V580M1059.5 572V579M1060.5 571V580M1061.5 572V579M1062.5 572V579M1063.5 574V577M1064.5 572V579M1065.5 573V578M1066.5 572V579M1067.5 573V578M1068.5 572V579M1069.5 573V578M1070.5 573V578M1071.5 573V578M1072.5 573V578M1073.5 573V578M1074.5 573V578M1075.5 571V580M1076.5 570V581M1077.5 571V580M1078.5 568V583M1079.5 569V582M1080.5 570V581M1081.5 569V582M1082.5 571V580M1083.5 574V577M1084.5 570V581M1085.5 573V578M1086.5 571V580M1087.5 572V579M1088.5 571V580M1089.5 574V577M1090.5 570V581M1091.5 574V577M1092.5 570V581M1093.5 571V580M1094.5 572V579M1095.5 571V580M1096.5 571V580M1097.5 572V579M1098.5 571V580M1099.5 571V580M1100.5 574V577M1101.5 573V578M1102.5 572V579M1103.5 573V578M1104.5 572V579M1105.5 571V580M1106.5 573V578M1107.5 573V578M1108.5 573V578M1109.5 572V579M1110.5 573V578M1111.5 573V578M1112.5 573V578M1113.5 574V577M1114.5 572V579M1115.5 574V577M1116.5 572V579M1117.5 573V578M1118.5 573V578M1119.5 574V577M1120.5 574V577M1121.5 573V578M1122.5 574V577M1123.5 574V577M1124.5 573V578M1125.5 574V577M1126.5 574V577M1127.5 574V577M1128.5 574V577M1129.5 574V577M1130.5 574V577M1132.5 574V577M1133.5 574V577M1134.5 574V577M1135.5 574V577" stroke="#000" stroke-width="1"/><path d="M136.5 550V601M138.5 551V602M139.5 552V602M140.5 564V588M142.5 563V588M143.5 555V597M144.5 560V592M146.5 545V610M148.5 563V588M150.5 546V611M152.5 556V597M154.5 562V590M156.5 555V598M158.5 574V577M160.5 574V577M162.5 564V585M166.5 566V586M168.5 551V603M170.5 551V603M172.5 556V599M174.5 566V586M176.5 560V589M178.5 564V588M179.5 552V600M182.5 572V580M183.5 573V578M185.5 574V577M187.5 574V577M188.5 574V577M190.5 574V577M191.5 574V577M192.5 574V577M194.5 574V578M196.5 574V578M197.5 574V577M198.5 574V577M200.5 574V577M202.5 569V582M206.5 568V583M208.5 559V590M212.5 551V596M214.5 551V597M216.5 522V619M220.5 496V644M222.5 513V628M224.5 433V709M228.5 458V678M230.5 504V635M231.5 421V721M232.5 500V647M234.5 442V694M236.5 431V694M238.5 479V681M240.5 509V642M242.5 453V701M243.5 434V719M246.5 488V657M248.5 510V640M249.5 500V658M250.5 498V657M252.5 534V612M254.5 548V599M256.5 532V614M258.5 555V599M260.5 549V600M262.5 543V605M264.5 532V613M266.5 544V607M270.5 553V602M272.5 554V598M276.5 548V598M278.5 538V616M282.5 530V626M284.5 540V609M286.5 539V607M290.5 525V622M292.5 549V597M294.5 528V613M298.5 547V599M299.5 531V623M300.5 543V608M302.5 541V613M304.5 528V629M305.5 530V623M306.5 553V599M308.5 527V619M310.5 551V601M312.5 567V585M314.5 572V580M316.5 529V622M318.5 534V616M320.5 514V634M322.5 519V627M324.5 536V608M326.5 499V639M327.5 546V602M330.5 495V644M332.5 534V616M333.5 540V618M334.5 537V610M335.5 502V643M336.5 540V609M338.5 500V665M340.5 531V618M346.5 532V624M348.5 513V641M350.5 509V652M352.5 513V631M354.5 518V643M356.5 544V611M358.5 544V612M360.5 557V597M362.5 548V607M364.5 539V619M366.5 543V604M371.5 539V617M374.5 557V594M375.5 564V586M376.5 557V594M378.5 544V609M380.5 562V587M381.5 552V600M382.5 559V590M384.5 559V590M386.5 540V610M387.5 560V588M388.5 555V595M390.5 564V588M392.5 551V602M393.5 556V598M394.5 556V598M396.5 557V594M400.5 556V594M404.5 561V587M410.5 566V583M412.5 557V595M413.5 568V582M416.5 574V577M420.5 574V576M422.5 574V577M426.5 565V588M428.5 564V587M429.5 563V590M430.5 563V589M431.5 564V586M434.5 545V602M438.5 514V637M439.5 525V617M440.5 526V623M441.5 532V611M444.5 547V607M448.5 501V658M454.5 523V628M456.5 497V650M458.5 547V600M460.5 526V634M462.5 532V627M463.5 550V601M464.5 504V651M466.5 550V600M467.5 532V626M468.5 544V603M470.5 540V618M471.5 518V644M472.5 550V600M476.5 553V599M478.5 538V606M482.5 532V625M484.5 555V594M490.5 556V595M492.5 531V619M494.5 550V597M496.5 541V613M497.5 535V624M498.5 549V603M500.5 538V607M502.5 549V597M504.5 555V600M505.5 543V612M508.5 540V618M512.5 551V601M514.5 560V591M516.5 542V609M518.5 573V578M520.5 574V578M522.5 574V578M526.5 574V578M528.5 573V578M532.5 574V578M534.5 573V578M536.5 530V616M538.5 527V627M539.5 533V614M540.5 482V660M541.5 544V611M542.5 514V649M545.5 527V629M546.5 512V631M547.5 518V631M548.5 507V657M550.5 481V665M556.5 511V638M558.5 528V614M560.5 558V591M562.5 559V592M563.5 550V602M564.5 548V604M566.5 542V607M568.5 563V591M570.5 563V590M572.5 538V610M573.5 561V590M574.5 556V599M577.5 539V613M578.5 546V605M582.5 552V599M584.5 548V605M586.5 561V591M587.5 560V592M588.5 561V589M590.5 553V594M594.5 564V585M595.5 557V592M596.5 559V595M598.5 558V591M600.5 559V592M602.5 564V588M603.5 561V587M604.5 557V593M605.5 562V586M606.5 550V606M608.5 560V588M610.5 563V588M611.5 557V595M612.5 559V595M613.5 549V602M614.5 551V597M616.5 554V596M618.5 546V600M620.5 556V595M621.5 546V603M622.5 531V616M624.5 556V595M625.5 553V595M629.5 533V611M630.5 550V597M632.5 556V595M634.5 539V606M635.5 557V594M636.5 546V601M638.5 557V594M639.5 546V605M640.5 534V613M642.5 556V599M644.5 554V598M646.5 565V587M662.5 568V582M664.5 565V586M666.5 569V583M667.5 567V584M668.5 564V589M670.5 558V595M672.5 563V587M676.5 558V596M678.5 557V592M680.5 567V584M682.5 566V587M684.5 554V596M686.5 563V589M688.5 567V582M692.5 563V588M694.5 560V594M697.5 564V588M698.5 555V597M699.5 562V589M700.5 562V590M702.5 560V588M704.5 572V579M716.5 551V600M719.5 517V642M720.5 526V632M725.5 512V645M726.5 513V637M727.5 535V622M728.5 549V604M730.5 537V610M732.5 535V612M738.5 509V641M740.5 522V638M742.5 515V646M743.5 515V639M744.5 519V639M746.5 548V606M748.5 533V625M749.5 555V597M754.5 574V578M756.5 573V578M760.5 574V578M762.5 574V578M764.5 574V578M766.5 574V578M770.5 573V578M771.5 573V578M772.5 574V578M774.5 574V578M776.5 573V578M778.5 571V580M780.5 565V584M784.5 568V582M786.5 568V583M787.5 568V583M788.5 567V583M790.5 552V599M794.5 540V613M796.5 549V598M798.5 526V617M802.5 531V622M803.5 530V625M804.5 531V612M805.5 529V618M806.5 556V597M809.5 525V625M810.5 558V595M811.5 522V634M814.5 523V620M815.5 534V617M816.5 530V614M817.5 543V610M818.5 541V617M820.5 559V595M822.5 533V613M825.5 534V622M826.5 540V618M828.5 555V595M830.5 547V610M832.5 547V601M834.5 558V596M836.5 546V602M839.5 534V610M840.5 529V630M844.5 532V614M846.5 546V606M847.5 556V595M848.5 550V601M850.5 572V579M851.5 572V578M852.5 572V579M854.5 572V579M856.5 572V578M858.5 572V578M860.5 572V578M862.5 572V578M864.5 572V578M865.5 571V580M866.5 572V579M868.5 572V579M870.5 558V592M871.5 546V605M872.5 560V590M874.5 564V589M875.5 550V604M878.5 559V590M879.5 558V594M880.5 559V594M882.5 559V590M883.5 563V590M886.5 545V606M890.5 558V595M891.5 560V594M892.5 551V600M893.5 542V603M894.5 545V608M895.5 546V601M896.5 552V603M898.5 548V601M900.5 554V598M902.5 553V601M905.5 551V598M906.5 543V613M909.5 562V588M911.5 558V590M912.5 551V601M914.5 558V590M918.5 565V586M919.5 544V605M920.5 541V611M922.5 556V599M924.5 551V598M926.5 555V600M928.5 563V590M935.5 561V592M936.5 551V600M939.5 550V599M940.5 545V612M942.5 526V621M944.5 533V613M946.5 548V599M948.5 546V601M952.5 529V621M954.5 550V600M956.5 560V591M958.5 528V620M960.5 550V605M962.5 535V614M965.5 533V621M966.5 530V621M969.5 537V619M970.5 561V588M972.5 550V596M976.5 547V600M977.5 536V612M978.5 532V615M980.5 558V591M982.5 538V618M984.5 533V620M985.5 560V590M990.5 546V599M992.5 551V599M993.5 535V620M994.5 533V617M996.5 558V592M998.5 561V592M1000.5 535V621M1002.5 558V592M1004.5 553V598M1006.5 558V594M1008.5 558V594M1010.5 558V595M1012.5 555V598M1014.5 557V594M1016.5 551V604M1018.5 558V594M1020.5 558V594M1022.5 555V600M1024.5 558V594M1026.5 554V600M1030.5 547V602M1032.5 560V592M1034.5 548V602M1036.5 556V591M1038.5 564V587M1040.5 548V599M1042.5 564V589M1044.5 558V592M1048.5 559V593M1049.5 551V600M1050.5 558V593M1052.5 559V592M1054.5 563V588M1056.5 561V592M1058.5 566V585M1060.5 567V585M1061.5 568V583M1062.5 571V580M1064.5 566V585M1066.5 566V585M1068.5 570V581M1070.5 570V581M1073.5 572V579M1074.5 569V581M1076.5 566V583M1078.5 562V587M1080.5 561V590M1082.5 562V590M1084.5 568V584M1090.5 563V587M1092.5 559V594M1094.5 568V584M1096.5 565V585M1098.5 570V581M1099.5 570V581M1102.5 570V580M1104.5 571V580M1110.5 567V585M1112.5 569V582M1115.5 571V579M1116.5 571V579M1117.5 568V583M1118.5 571V581M1119.5 570V581M1122.5 571V580M1124.5 572V579M1126.5 571V580M1127.5 574V577M1128.5 573V578M1130.5 573V578M1132.5 573V578M1133.5 574V577M1134.5 574V577M1136.5 574V577M147.5 510V642M165.5 540V610M204.5 550V600M220.5 434V716M228.5 446V706M236.5 420V730M240.5 416V736M246.5 440V710M299.5 498V652M329.5 492V660M462.5 476V676M553.5 460V690M610.5 528V622M723.5 502V650M733.5 502V650M801.5 520V630M832.5 524V628M877.5 536V614M917.5 540V612M947.5 526V626M955.5 528V622" stroke="#000" stroke-width="1"/></svg>
<div class="a" style="left:1471px;top:632px;width:288px;height:289px;background:#d4d0c8;border:1px solid;border-color:#d4d0c8 #404040 #404040 #d4d0c8;box-shadow:inset 1px 1px #fff,inset -1px -1px #808080"></div>
<div class="a" style="left:1475px;top:636px;width:280px;height:18px;background:linear-gradient(to right,#808080,#c0c0c0)"></div>
<svg class="a" style="left:1477px;top:638px" width="14" height="13"><path d="M4 1.5H13L11 4H8L4 9H11L9 11.5H1L3 9H6L9 4H2Z" fill="#d01010"/></svg>
<div class="t" style="left:1495px;top:639px;font-weight:bold;font-size:11.7px;color:#d4d0c8">Debugger-Ausgabe - SoundSizeTe...</div>
<div class="btn" style="left:1703px;top:638px;width:16px;height:14px"></div>
<div class="btn" style="left:1719px;top:638px;width:16px;height:14px"></div>
<div class="btn" style="left:1737px;top:638px;width:16px;height:14px"></div>
<div class="a" style="left:1707px;top:647px;width:6px;height:2px;background:#000"></div>
<div class="a" style="left:1722px;top:640px;width:9px;height:9px;border:1px solid #000;border-top-width:2px"></div>
<svg class="a" style="left:1740px;top:640px" width="10" height="9"><path d="M1 1L9 8M9 1L1 8" stroke="#000" stroke-width="1.6"/></svg>
<div class="btn" style="left:1485px;top:665px;width:80px;height:24px"></div>
<div class="t" style="left:1485px;top:671px;width:80px;text-align:center;font-size:12px;transform:scaleX(0.88)">Kopieren</div>
<div class="btn" style="left:1575px;top:665px;width:80px;height:24px"></div>
<div class="t" style="left:1575px;top:671px;width:80px;text-align:center;font-size:12px;transform:scaleX(0.88)">Speichern</div>
<div class="btn" style="left:1665px;top:665px;width:80px;height:24px"></div>
<div class="t" style="left:1665px;top:671px;width:80px;text-align:center;font-size:12px;transform:scaleX(0.88)">Löschen</div>
<div class="sunk" style="left:1485px;top:699px;width:260px;height:162px;background:#fff"></div>
<div class="t" style="left:1489px;top:702px;font-size:12px;transform:scaleX(0.89);transform-origin:0 0">Adr=5049080 - t=994 - Wert=383</div>
<div class="t" style="left:1489px;top:715px;font-size:12px;transform:scaleX(0.89);transform-origin:0 0">Adr=5048864 - t=995 - Wert=-3365</div>
<div class="t" style="left:1489px;top:728px;font-size:12px;transform:scaleX(0.89);transform-origin:0 0">Adr=5048648 - t=996 - Wert=-1204</div>
<div class="t" style="left:1489px;top:741px;font-size:12px;transform:scaleX(0.89);transform-origin:0 0">Adr=5048432 - t=997 - Wert=897</div>
<div class="t" style="left:1489px;top:754px;font-size:12px;transform:scaleX(0.89);transform-origin:0 0">Adr=5048216 - t=998 - Wert=-1005</div>
<div class="t" style="left:1489px;top:767px;font-size:12px;transform:scaleX(0.89);transform-origin:0 0">Adr=5048000 - t=999 - Wert=147</div>
<div class="t" style="left:1489px;top:780px;font-size:12px;transform:scaleX(0.89);transform-origin:0 0">Adr=5047784 - t=1000 - Wert=-91</div>
<div class="t" style="left:1489px;top:793px;font-size:12px;transform:scaleX(0.89);transform-origin:0 0">Adr=5047568 - t=1001 - Wert=-62</div>
<div class="t" style="left:1489px;top:806px;font-size:12px;transform:scaleX(0.89);transform-origin:0 0">Adr=5047352 - t=1002 - Wert=162</div>
<div class="a" style="left:1487px;top:818px;width:240px;height:13px;background:#0a246a"></div>
<div class="t" style="left:1489px;top:819px;font-size:12px;color:#fff;transform:scaleX(0.89);transform-origin:0 0">Adr=5047136 - t=1003 - Wert=61</div>
<div class="a" style="left:1727px;top:701px;width:16px;height:142px;background-color:#fff;background-image:linear-gradient(45deg,#d4d0c8 25%,transparent 25%,transparent 75%,#d4d0c8 75%),linear-gradient(45deg,#d4d0c8 25%,transparent 25%,transparent 75%,#d4d0c8 75%);background-size:2px 2px;background-position:0 0,1px 1px"></div>
<div class="a" style="left:1727px;top:701px;width:16px;height:16px;background:#d4d0c8;border:1px solid;border-color:#d4d0c8 #404040 #404040 #d4d0c8;box-shadow:inset 1px 1px #fff,inset -1px -1px #808080"></div>
<svg class="a" style="left:1731px;top:706px" width="8" height="5"><path d="M4 0L8 4H0Z" fill="#000"/></svg>
<div class="a" style="left:1727px;top:818px;width:16px;height:8px;background:#d4d0c8;border:1px solid;border-color:#d4d0c8 #404040 #404040 #d4d0c8;box-shadow:inset 1px 1px #fff,inset -1px -1px #808080"></div>
<div class="a" style="left:1727px;top:826px;width:16px;height:16px;background:#d4d0c8;border:1px solid;border-color:#d4d0c8 #404040 #404040 #d4d0c8;box-shadow:inset 1px 1px #fff,inset -1px -1px #808080"></div>
<svg class="a" style="left:1731px;top:832px" width="8" height="5"><path d="M0 0H8L4 4Z" fill="#000"/></svg>
<div class="a" style="left:1487px;top:843px;width:240px;height:16px;background-color:#fff;background-image:linear-gradient(45deg,#d4d0c8 25%,transparent 25%,transparent 75%,#d4d0c8 75%),linear-gradient(45deg,#d4d0c8 25%,transparent 25%,transparent 75%,#d4d0c8 75%);background-size:2px 2px;background-position:0 0,1px 1px"></div>
<div class="a" style="left:1487px;top:843px;width:16px;height:16px;background:#d4d0c8;border:1px solid;border-color:#d4d0c8 #404040 #404040 #d4d0c8;box-shadow:inset 1px 1px #fff,inset -1px -1px #808080"></div>
<svg class="a" style="left:1493px;top:847px" width="5" height="8"><path d="M4 0V8L0 4Z" fill="#000"/></svg>
<div class="a" style="left:1503px;top:843px;width:76px;height:16px;background:#d4d0c8;border:1px solid;border-color:#d4d0c8 #404040 #404040 #d4d0c8;box-shadow:inset 1px 1px #fff,inset -1px -1px #808080"></div>
<div class="a" style="left:1711px;top:843px;width:16px;height:16px;background:#d4d0c8;border:1px solid;border-color:#d4d0c8 #404040 #404040 #d4d0c8;box-shadow:inset 1px 1px #fff,inset -1px -1px #808080"></div>
<svg class="a" style="left:1717px;top:847px" width="5" height="8"><path d="M0 0V8L4 4Z" fill="#000"/></svg>
<div class="a" style="left:1727px;top:843px;width:16px;height:16px;background:#d4d0c8"></div>
<div class="t" style="left:1485px;top:870px;font-size:12px;transform:scaleX(0.87);transform-origin:0 0">Anzeigen:</div>
<div class="sunk" style="left:1539px;top:866px;width:141px;height:21px;background:#fff"></div>
<div class="a" style="left:1662px;top:868px;width:16px;height:17px;background:#d4d0c8;border:1px solid;border-color:#d4d0c8 #404040 #404040 #d4d0c8;box-shadow:inset 1px 1px #fff,inset -1px -1px #808080"></div>
<svg class="a" style="left:1666px;top:874px" width="8" height="5"><path d="M0 0H8L4 4Z" fill="#000"/></svg>
<div class="btn" style="left:1685px;top:866px;width:60px;height:21px"></div>
<div class="t" style="left:1685px;top:870px;width:60px;text-align:center;font-size:12px;transform:scaleX(0.87)">Anzeigen</div>
<div class="a" style="left:1475px;top:899px;width:263px;height:18px;border:1px solid;border-color:#808080 #fff #fff #808080"></div>
<svg class="a" style="left:1742px;top:905px" width="12" height="12"><path d="M11 1L1 11M11 5L5 11M11 9L9 11" stroke="#808080" stroke-width="1"/><path d="M11 2L2 11M11 6L6 11M11 10L10 11" stroke="#fff" stroke-width="1"/></svg>
</body></html>
